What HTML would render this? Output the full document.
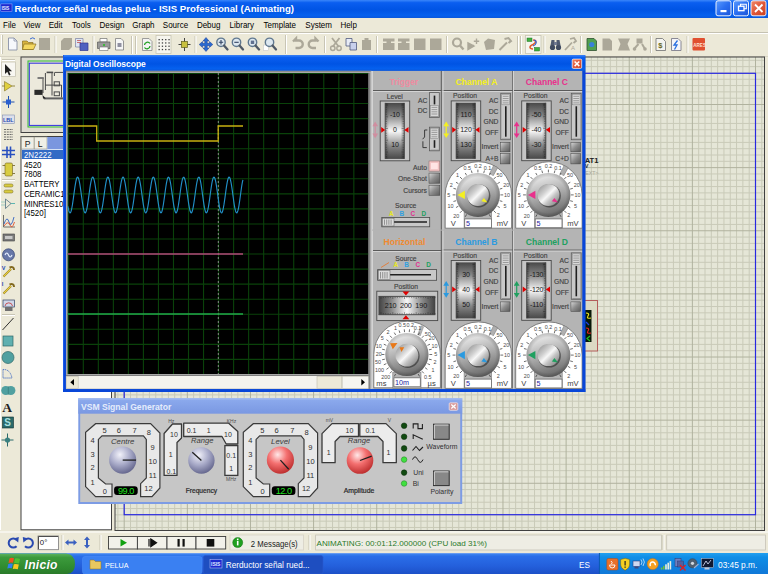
<!DOCTYPE html><html><head><meta charset="utf-8"><style>html,body{margin:0;padding:0;width:768px;height:574px;overflow:hidden;background:#ece9d8}svg{display:block}text{font-family:"Liberation Sans",sans-serif}</style></head><body><svg width="768" height="574" viewBox="0 0 768 574">
<defs>
<linearGradient id="gTitle" x1="0" y1="0" x2="0" y2="1">
 <stop offset="0" stop-color="#3a86fa"/><stop offset="0.15" stop-color="#0a5ef0"/>
 <stop offset="0.55" stop-color="#0054e4"/><stop offset="0.85" stop-color="#0560ee"/><stop offset="1" stop-color="#0a58dc"/>
</linearGradient>
<linearGradient id="gTitleIn" x1="0" y1="0" x2="0" y2="1">
 <stop offset="0" stop-color="#a8c0f4"/><stop offset="0.15" stop-color="#8aa8ec"/>
 <stop offset="1" stop-color="#7a98e2"/>
</linearGradient>
<linearGradient id="gTask" x1="0" y1="0" x2="0" y2="1">
 <stop offset="0" stop-color="#3d86f0"/><stop offset="0.15" stop-color="#2a6ee8"/><stop offset="0.6" stop-color="#2460dc"/><stop offset="1" stop-color="#1c50c8"/>
</linearGradient>
<linearGradient id="gStart" x1="0" y1="0" x2="0" y2="1">
 <stop offset="0" stop-color="#5fb45f"/><stop offset="0.2" stop-color="#3c9a3c"/><stop offset="0.7" stop-color="#2f8a2f"/><stop offset="1" stop-color="#2a7a2a"/>
</linearGradient>
<linearGradient id="gTray" x1="0" y1="0" x2="0" y2="1">
 <stop offset="0" stop-color="#22a0ef"/><stop offset="0.2" stop-color="#0f8ee6"/><stop offset="1" stop-color="#1078d8"/>
</linearGradient>
<linearGradient id="gDrumV" x1="0" y1="0" x2="0" y2="1">
 <stop offset="0" stop-color="#484848"/><stop offset="0.22" stop-color="#858585"/><stop offset="0.5" stop-color="#f8f8f8"/><stop offset="0.78" stop-color="#858585"/><stop offset="1" stop-color="#484848"/>
</linearGradient>
<linearGradient id="gDrumH" x1="0" y1="0" x2="1" y2="0">
 <stop offset="0" stop-color="#404040"/><stop offset="0.22" stop-color="#858585"/><stop offset="0.5" stop-color="#f8f8f8"/><stop offset="0.78" stop-color="#858585"/><stop offset="1" stop-color="#404040"/>
</linearGradient>
<linearGradient id="gEdgeV" x1="0" y1="0" x2="1" y2="0">
 <stop offset="0" stop-color="#000" stop-opacity="0.3"/><stop offset="0.2" stop-color="#000" stop-opacity="0"/><stop offset="0.8" stop-color="#000" stop-opacity="0"/><stop offset="1" stop-color="#000" stop-opacity="0.3"/>
</linearGradient>
<linearGradient id="gBtn" x1="0" y1="0" x2="1" y2="1">
 <stop offset="0" stop-color="#d8d8d8"/><stop offset="0.5" stop-color="#8c8c8c"/><stop offset="1" stop-color="#5a5a5a"/>
</linearGradient>
<linearGradient id="gKnob" x1="0.3" y1="0" x2="0.6" y2="1">
 <stop offset="0" stop-color="#f2f2f2"/><stop offset="0.4" stop-color="#bababa"/><stop offset="1" stop-color="#666666"/>
</linearGradient>
<radialGradient id="gKnobEdge" cx="0.5" cy="0.5" r="0.5">
 <stop offset="0.8" stop-color="#000" stop-opacity="0"/><stop offset="1" stop-color="#000" stop-opacity="0.2"/>
</radialGradient>
<linearGradient id="gCap" x1="0" y1="0" x2="1" y2="1">
 <stop offset="0" stop-color="#8a8a8a"/><stop offset="0.35" stop-color="#d0d0d0"/><stop offset="0.5" stop-color="#f8f8f8"/><stop offset="0.65" stop-color="#c4c4c4"/><stop offset="1" stop-color="#707070"/>
</linearGradient>
<radialGradient id="gBlueKnob" cx="0.4" cy="0.3" r="0.75">
 <stop offset="0" stop-color="#f2f2fa"/><stop offset="0.5" stop-color="#a8aac8"/><stop offset="1" stop-color="#5e6088"/>
</radialGradient>
<radialGradient id="gRedKnob" cx="0.4" cy="0.3" r="0.75">
 <stop offset="0" stop-color="#ffe8e8"/><stop offset="0.45" stop-color="#f47070"/><stop offset="1" stop-color="#b82828"/>
</radialGradient>
<linearGradient id="gXPbtn" x1="0" y1="0" x2="1" y2="1">
 <stop offset="0" stop-color="#5a9bff"/><stop offset="0.5" stop-color="#2a6ef0"/><stop offset="1" stop-color="#1c55d8"/>
</linearGradient>
<linearGradient id="gXPclose" x1="0" y1="0" x2="1" y2="1">
 <stop offset="0" stop-color="#f08a6a"/><stop offset="0.5" stop-color="#e0583a"/><stop offset="1" stop-color="#c84020"/>
</linearGradient>
</defs>
<rect x="0" y="0" width="768" height="574" fill="#ece9d8" /><rect x="0" y="0" width="768" height="18" fill="url(#gTitle)" /><rect x="0.8" y="3.9" width="11.2" height="7.8" fill="#1c2ad0" stroke="#a8b4ff" stroke-width="0.5"/><text x="1.6" y="10.2" font-size="4.6" fill="#dfe6ff" text-anchor="start" font-weight="bold" letter-spacing="-0.3">ISIS</text><text x="14.6" y="12.1" font-size="9.8" fill="#ffffff" text-anchor="start" font-weight="bold" textLength="279.50" lengthAdjust="spacingAndGlyphs" >Rerductor señal ruedas pelua - ISIS Professional (Animating)</text><rect x="716" y="0.8" width="15" height="15" rx="2" fill="url(#gXPbtn)" stroke="#ffffff" stroke-width="0.9"/><rect x="733.5" y="0.8" width="15" height="15" rx="2" fill="url(#gXPbtn)" stroke="#ffffff" stroke-width="0.9"/><rect x="751" y="0.8" width="15" height="15" rx="2" fill="url(#gXPclose)" stroke="#ffffff" stroke-width="0.9"/><rect x="720.5" y="10" width="6" height="2.2" fill="#fff" /><rect x="738.5" y="6.2" width="5.5" height="4.5" fill="none" stroke="#fff" stroke-width="1.3"/><path d="M740.5 6.2 V4.3 H746.3 V8.8 H744" fill="none" stroke="#fff" stroke-width="1.1"/><path d="M755 4.5 L762.5 12 M762.5 4.5 L755 12" stroke="#fff" stroke-width="1.8"/><text x="3" y="27.7" font-size="8.6" fill="#000" text-anchor="start" font-weight="normal" textLength="12.89" lengthAdjust="spacingAndGlyphs" >File</text><text x="23.4" y="27.7" font-size="8.6" fill="#000" text-anchor="start" font-weight="normal" textLength="17.19" lengthAdjust="spacingAndGlyphs" >View</text><text x="48.7" y="27.7" font-size="8.6" fill="#000" text-anchor="start" font-weight="normal" textLength="13.78" lengthAdjust="spacingAndGlyphs" >Edit</text><text x="72" y="27.7" font-size="8.6" fill="#000" text-anchor="start" font-weight="normal" textLength="18.67" lengthAdjust="spacingAndGlyphs" >Tools</text><text x="99.5" y="27.7" font-size="8.6" fill="#000" text-anchor="start" font-weight="normal" textLength="24.90" lengthAdjust="spacingAndGlyphs" >Design</text><text x="132.3" y="27.7" font-size="8.6" fill="#000" text-anchor="start" font-weight="normal" textLength="22.23" lengthAdjust="spacingAndGlyphs" >Graph</text><text x="162.8" y="27.7" font-size="8.6" fill="#000" text-anchor="start" font-weight="normal" textLength="25.34" lengthAdjust="spacingAndGlyphs" >Source</text><text x="196.9" y="27.7" font-size="8.6" fill="#000" text-anchor="start" font-weight="normal" textLength="23.57" lengthAdjust="spacingAndGlyphs" >Debug</text><text x="229.6" y="27.7" font-size="8.6" fill="#000" text-anchor="start" font-weight="normal" textLength="24.45" lengthAdjust="spacingAndGlyphs" >Library</text><text x="263.6" y="27.7" font-size="8.6" fill="#000" text-anchor="start" font-weight="normal" textLength="32.45" lengthAdjust="spacingAndGlyphs" >Template</text><text x="305.3" y="27.7" font-size="8.6" fill="#000" text-anchor="start" font-weight="normal" textLength="26.67" lengthAdjust="spacingAndGlyphs" >System</text><text x="340.4" y="27.7" font-size="8.6" fill="#000" text-anchor="start" font-weight="normal" textLength="16.45" lengthAdjust="spacingAndGlyphs" >Help</text><line x1="0" y1="32.5" x2="768" y2="32.5" stroke="#c5c2b2" stroke-width="1" /><line x1="0" y1="33.5" x2="768" y2="33.5" stroke="#ffffff" stroke-width="1" /><line x1="1.5" y1="35" x2="1.5" y2="54" stroke="#fff" stroke-width="1" /><line x1="2.5" y1="35" x2="2.5" y2="54" stroke="#c8c5b5" stroke-width="1" /><path d="M8.5 38 H14 L17 41 V50 H8.5 Z" fill="#f6f8fc" stroke="#8a92a8" stroke-width="0.9"/><path d="M14 38 V41 H17" fill="none" stroke="#8a92a8" stroke-width="0.8"/><path d="M22.5 41 H27 L28.5 42.5 H33 V49.5 H22.5 Z" fill="#d8b440" stroke="#8a7020" stroke-width="0.7"/><path d="M24 44 H36 L33.5 49.5 H22.5 Z" fill="#f4d860" stroke="#8a7020" stroke-width="0.7"/><path d="M30 39 Q33 36.5 35 39" fill="none" stroke="#3a6ad0" stroke-width="1"/><rect x="39" y="38" width="11" height="12" fill="#aca899" /><line x1="55" y1="36" x2="55" y2="53" stroke="#c8c5b5" stroke-width="1" /><line x1="56" y1="36" x2="56" y2="53" stroke="#ffffff" stroke-width="1" /><path d="M61 41 L64 38 H72 V47 L69 50 H61 Z" fill="#aca899"/><path d="M75.5 38.5 H83 V47 H75.5 Z" fill="#dfe6f4" stroke="#7a80a0" stroke-width="0.7"/><path d="M80 43 H88 V50.5 H80 Z" fill="#5060c0" stroke="#303890" stroke-width="0.7"/><path d="M77 40.5 H81 M77 42.5 H81" stroke="#c05050" stroke-width="0.8"/><line x1="93" y1="36" x2="93" y2="53" stroke="#c8c5b5" stroke-width="1" /><line x1="94" y1="36" x2="94" y2="53" stroke="#ffffff" stroke-width="1" /><path d="M100 38.5 H107 V42 H100 Z" fill="#fff" stroke="#707070" stroke-width="0.7"/><path d="M97.5 42 H110 V48.5 H97.5 Z" fill="#9a9a9a" stroke="#5a5a5a" stroke-width="0.7"/><path d="M99.5 47 H108 V50.5 H99.5 Z" fill="#fff" stroke="#707070" stroke-width="0.6"/><circle cx="104" cy="45" r="1" fill="#20c020"/><path d="M115.5 38.5 H121 L123.5 41 V50 H115.5 Z" fill="#f6f6f6" stroke="#808080" stroke-width="0.8"/><rect x="117.5" y="43" width="4" height="4" fill="#9090a0" /><line x1="131.5" y1="36" x2="131.5" y2="54" stroke="#c8c5b5" stroke-width="1" /><line x1="132.5" y1="36" x2="132.5" y2="54" stroke="#fff" stroke-width="1" /><line x1="135.5" y1="36" x2="135.5" y2="54" stroke="#c8c5b5" stroke-width="1" /><line x1="136.5" y1="36" x2="136.5" y2="54" stroke="#fff" stroke-width="1" /><path d="M142.5 38.5 H149 L152 41.5 V50.5 H142.5 Z" fill="#f4f4f4" stroke="#888" stroke-width="0.8"/><path d="M144.5 45 A3 3 0 0 1 150 43.5 M150 46 A3 3 0 0 1 144.5 47.5" fill="none" stroke="#20a020" stroke-width="1.3"/><rect x="156" y="35.5" width="15" height="18" fill="#f6f5ee" stroke="#c8c5b5" stroke-width="0.8"/><rect x="158.5" y="39.0" width="1.3" height="1.3" fill="#404040" /><rect x="158.5" y="42.3" width="1.3" height="1.3" fill="#404040" /><rect x="158.5" y="45.6" width="1.3" height="1.3" fill="#404040" /><rect x="158.5" y="48.9" width="1.3" height="1.3" fill="#404040" /><rect x="161.8" y="39.0" width="1.3" height="1.3" fill="#404040" /><rect x="161.8" y="42.3" width="1.3" height="1.3" fill="#404040" /><rect x="161.8" y="45.6" width="1.3" height="1.3" fill="#404040" /><rect x="161.8" y="48.9" width="1.3" height="1.3" fill="#404040" /><rect x="165.1" y="39.0" width="1.3" height="1.3" fill="#404040" /><rect x="165.1" y="42.3" width="1.3" height="1.3" fill="#404040" /><rect x="165.1" y="45.6" width="1.3" height="1.3" fill="#404040" /><rect x="165.1" y="48.9" width="1.3" height="1.3" fill="#404040" /><rect x="168.4" y="39.0" width="1.3" height="1.3" fill="#404040" /><rect x="168.4" y="42.3" width="1.3" height="1.3" fill="#404040" /><rect x="168.4" y="45.6" width="1.3" height="1.3" fill="#404040" /><rect x="168.4" y="48.9" width="1.3" height="1.3" fill="#404040" /><line x1="184.5" y1="38" x2="184.5" y2="51" stroke="#303030" stroke-width="0.9" /><line x1="178.5" y1="44.5" x2="190.5" y2="44.5" stroke="#303030" stroke-width="0.9" /><rect x="181.5" y="41.5" width="6" height="6" fill="#c8c040" stroke="#606020" stroke-width="0.7"/><line x1="195" y1="36" x2="195" y2="53" stroke="#c8c5b5" stroke-width="1" /><line x1="196" y1="36" x2="196" y2="53" stroke="#ffffff" stroke-width="1" /><path d="M206 37.5 L209 41 H207.2 V43.3 H209.5 V41.5 L212.8 44.5 L209.5 47.5 V45.7 H207.2 V48 H209 L206 51.5 L203 48 H204.8 V45.7 H202.5 V47.5 L199.2 44.5 L202.5 41.5 V43.3 H204.8 V41 H203 Z" fill="#2a6ad0" stroke="#1a3a90" stroke-width="0.5"/><circle cx="221.0" cy="42.3" r="4.2" fill="#dde8f0" stroke="#607890" stroke-width="1.4"/><path d="M224.0 45.5 L227.5 49.5" stroke="#505a68" stroke-width="2.3" stroke-linecap="round"/><path d="M218.8 42.3 H223.2 M221.0 40.1 V44.5" stroke="#304060" stroke-width="1.1"/><circle cx="236.5" cy="42.3" r="4.2" fill="#dde8f0" stroke="#607890" stroke-width="1.4"/><path d="M239.5 45.5 L243 49.5" stroke="#505a68" stroke-width="2.3" stroke-linecap="round"/><path d="M234.3 42.3 H238.7" stroke="#304060" stroke-width="1.1"/><circle cx="252.5" cy="42.3" r="4.2" fill="#dde8f0" stroke="#607890" stroke-width="1.4"/><path d="M255.5 45.5 L259 49.5" stroke="#505a68" stroke-width="2.3" stroke-linecap="round"/><rect x="250.8" y="40.6" width="3.4" height="3.4" fill="#607090" /><rect x="263.5" y="45" width="5" height="5.5" fill="#fff" stroke="#c0c0c0" stroke-width="0.5"/><circle cx="269.5" cy="42.3" r="4.2" fill="#dde8f0" stroke="#607890" stroke-width="1.4"/><path d="M272.5 45.5 L276 49.5" stroke="#505a68" stroke-width="2.3" stroke-linecap="round"/><line x1="285.5" y1="35" x2="285.5" y2="54" stroke="#c8c5b5" stroke-width="1" /><line x1="286.5" y1="35" x2="286.5" y2="54" stroke="#fff" stroke-width="1" /><path d="M293 41.5 L296 38.5 V40.5 H299 A3.5 3.5 0 0 1 299 48 H295.5" fill="none" stroke="#aca899" stroke-width="2.4"/><path d="M318.5 41.5 L315.5 38.5 V40.5 H312.5 A3.5 3.5 0 0 0 312.5 48 H316" fill="none" stroke="#aca899" stroke-width="2.4"/><line x1="324.5" y1="36" x2="324.5" y2="53" stroke="#c8c5b5" stroke-width="1" /><line x1="325.5" y1="36" x2="325.5" y2="53" stroke="#ffffff" stroke-width="1" /><path d="M332 38 L339 47 M339.5 38 L332.5 47" stroke="#aca899" stroke-width="1.8"/><circle cx="332.8" cy="48.3" r="2.2" fill="none" stroke="#aca899" stroke-width="1.5"/><circle cx="339" cy="48.3" r="2.2" fill="none" stroke="#aca899" stroke-width="1.5"/><path d="M346 38.5 H352 V46 H346 Z" fill="#e8ecf6" stroke="#505a80" stroke-width="0.8"/><path d="M350 42.5 H356.5 V50 H350 Z" fill="#c8d0ec" stroke="#505a80" stroke-width="0.8"/><path d="M362 40 H371 V50 H362 Z" fill="#aca899"/><rect x="364.5" y="38" width="4" height="3" fill="#aca899" /><line x1="376.5" y1="36" x2="376.5" y2="53" stroke="#c8c5b5" stroke-width="1" /><line x1="377.5" y1="36" x2="377.5" y2="53" stroke="#ffffff" stroke-width="1" /><path d="M383 38.5 H394.5 V41.5 H391 V43 H394.5 V50 H383 V43 H386.5 V41.5 H383 Z" fill="#aca899"/><path d="M398 38.5 H409.5 V41.5 H406 V43 H409.5 V50 H398 V43 H401.5 V41.5 H398 Z" fill="#aca899"/><rect x="414" y="38.5" width="11.5" height="11.5" fill="#aca899" /><rect x="430" y="38.5" width="11.5" height="11.5" fill="#aca899" /><line x1="446.5" y1="36" x2="446.5" y2="53" stroke="#c8c5b5" stroke-width="1" /><line x1="447.5" y1="36" x2="447.5" y2="53" stroke="#ffffff" stroke-width="1" /><circle cx="457" cy="42.5" r="4" fill="none" stroke="#aca899" stroke-width="2.2"/><path d="M460 45.5 L463.5 49.5" stroke="#aca899" stroke-width="2.4"/><path d="M468 43 L474 46 L468 49.5 Z M471 45.5 H474 M476.5 38.5 V44 M473.8 41.2 H479.2" fill="#aca899" stroke="#aca899" stroke-width="1.4"/><path d="M484 42 L488 38.5 L495 40 L494 49 L486 50 Z" fill="#aca899"/><path d="M499.5 50 L507 42.5 M504.5 39 L508.5 38 L511 41 L508.5 43" fill="none" stroke="#aca899" stroke-width="2"/><line x1="517.5" y1="36" x2="517.5" y2="54" stroke="#c8c5b5" stroke-width="1" /><line x1="518.5" y1="36" x2="518.5" y2="54" stroke="#fff" stroke-width="1" /><line x1="520.5" y1="36" x2="520.5" y2="54" stroke="#c8c5b5" stroke-width="1" /><line x1="521.5" y1="36" x2="521.5" y2="54" stroke="#fff" stroke-width="1" /><rect x="525.5" y="35.5" width="15.5" height="18" fill="#f6f5ee" stroke="#c8c5b5" stroke-width="0.8"/><path d="M533 40 C 537 40, 536 43, 533 44.5 C 529 46, 529 49, 533 49" fill="none" stroke="#e06030" stroke-width="1.6"/><path d="M534 40 C 537.5 41, 536.5 45, 533 46" fill="none" stroke="#3060d0" stroke-width="1.2"/><rect x="527" y="38" width="5" height="3.5" fill="#40b040" stroke="#207020" stroke-width="0.5"/><rect x="534.5" y="47.5" width="5" height="3.5" fill="#40b040" stroke="#207020" stroke-width="0.5"/><line x1="544" y1="36" x2="544" y2="53" stroke="#c8c5b5" stroke-width="1" /><line x1="545" y1="36" x2="545" y2="53" stroke="#ffffff" stroke-width="1" /><path d="M550 48 L551.5 40 H554.5 V48 Z M556.5 48 V40 H559.5 L561 48 Z" fill="#505a70"/><circle cx="552.5" cy="47.5" r="2.6" fill="#404a60"/><circle cx="558.5" cy="47.5" r="2.6" fill="#404a60"/><rect x="554" y="42" width="3" height="3" fill="#707890" /><path d="M565 50 L572 42.5 M570 39 L574 38 L576 41 L573.5 43" fill="none" stroke="#aca899" stroke-width="1.8"/><text x="571" y="50" font-size="6" fill="#aca899">A</text><line x1="580.5" y1="36" x2="580.5" y2="53" stroke="#c8c5b5" stroke-width="1" /><line x1="581.5" y1="36" x2="581.5" y2="53" stroke="#ffffff" stroke-width="1" /><path d="M587 38.5 H594 L596.5 41 V50.5 H587 Z" fill="#50a050" stroke="#305030" stroke-width="0.8"/><circle cx="591.8" cy="44.5" r="2.6" fill="#3880d8"/><path d="M602.5 38.5 H609.5 L612 41 V50.5 H602.5 Z" fill="#aca899"/><path d="M618 38.5 H630 L627.5 44 L630 50.5 H618 L620.5 44 Z" fill="#aca899"/><path d="M634 49 L638.5 44 M642 44 L645 49" stroke="#aca899" stroke-width="2"/><rect x="636.5" y="38.5" width="6" height="5" fill="#aca899"/><circle cx="634.5" cy="49" r="1.8" fill="#aca899"/><circle cx="645" cy="49" r="1.8" fill="#aca899"/><line x1="650.5" y1="36" x2="650.5" y2="53" stroke="#c8c5b5" stroke-width="1" /><line x1="651.5" y1="36" x2="651.5" y2="53" stroke="#ffffff" stroke-width="1" /><path d="M656 38.5 H662.5 L665.5 41.5 V50.5 H656 Z" fill="#f4f4f0" stroke="#707070" stroke-width="0.8"/><text x="658.3" y="48.3" font-size="7.5" fill="#6a6a20" text-anchor="start" font-weight="bold" >$</text><path d="M671.5 38.5 H678 L681 41.5 V50.5 H671.5 Z" fill="#f4f4f8" stroke="#707080" stroke-width="0.8"/><path d="M677.5 40.5 L674 45 H677 L674.5 49.5" fill="none" stroke="#2a70e0" stroke-width="1.3"/><line x1="687" y1="36" x2="687" y2="53" stroke="#c8c5b5" stroke-width="1" /><line x1="688" y1="36" x2="688" y2="53" stroke="#ffffff" stroke-width="1" /><rect x="692.5" y="38" width="12.5" height="12.5" fill="#e05030" rx="1"/><text x="693.2" y="47.2" font-size="4.6" fill="#ffe0d0" text-anchor="start" font-weight="bold" >ARES</text><line x1="0" y1="56.5" x2="768" y2="56.5" stroke="#d8d4c4" stroke-width="1" /><line x1="0.5" y1="57" x2="0.5" y2="530" stroke="#fff" stroke-width="1" /><line x1="2" y1="59.5" x2="15" y2="59.5" stroke="#c8c5b5" stroke-width="1" /><line x1="2" y1="60.5" x2="15" y2="60.5" stroke="#fff" stroke-width="1" /><rect x="1.5" y="62" width="14" height="14.5" fill="#f8f7f2" stroke="#c8c5b5" stroke-width="0.8"/><path d="M5 64 V74 L7.3 71.8 L9 75.5 L10.6 74.8 L9 71.2 H12 Z" fill="#202020"/><path d="M4.5 81.5 L12 86 L4.5 91 Z" fill="#e0d040" stroke="#807020" stroke-width="0.6"/><line x1="2" y1="86" x2="4.5" y2="86" stroke="#807020" stroke-width="0.8" /><line x1="12" y1="86" x2="15" y2="86" stroke="#807020" stroke-width="0.8" /><line x1="8.5" y1="96" x2="8.5" y2="108" stroke="#2050b0" stroke-width="1" /><line x1="2.5" y1="102" x2="14.5" y2="102" stroke="#2050b0" stroke-width="1" /><rect x="6" y="99.5" width="5" height="5" fill="#2a60d0"/><rect x="2.5" y="115" width="12" height="8.5" fill="#dde0ec" stroke="#8090b0" stroke-width="0.6"/><text x="3" y="121.8" font-size="5.5" fill="#2a4ab0" text-anchor="start" font-weight="bold" >LBL</text><line x1="4" y1="129.5" x2="13" y2="129.5" stroke="#606060" stroke-width="0.9" stroke-dasharray="2,0.8"/><line x1="4" y1="132" x2="13" y2="132" stroke="#606060" stroke-width="0.9" stroke-dasharray="2,0.8"/><line x1="4" y1="134.5" x2="13" y2="134.5" stroke="#606060" stroke-width="0.9" stroke-dasharray="2,0.8"/><line x1="4" y1="137" x2="13" y2="137" stroke="#606060" stroke-width="0.9" stroke-dasharray="2,0.8"/><line x1="4" y1="139.5" x2="13" y2="139.5" stroke="#606060" stroke-width="0.9" stroke-dasharray="2,0.8"/><line x1="2" y1="150.5" x2="15" y2="150.5" stroke="#2a50c0" stroke-width="1.5" /><line x1="2" y1="154.5" x2="15" y2="154.5" stroke="#2a50c0" stroke-width="1.5" /><line x1="7" y1="146.5" x2="7" y2="158" stroke="#2a50c0" stroke-width="1.6" /><line x1="10.5" y1="146.5" x2="10.5" y2="158" stroke="#2a50c0" stroke-width="1.6" /><rect x="5" y="163" width="7.5" height="13" rx="1.5" fill="#d8cc40" stroke="#706020" stroke-width="0.6"/><line x1="2.5" y1="165.5" x2="5" y2="165.5" stroke="#706020" stroke-width="0.8" /><line x1="12.5" y1="165.5" x2="15" y2="165.5" stroke="#706020" stroke-width="0.8" /><line x1="2.5" y1="173.5" x2="5" y2="173.5" stroke="#706020" stroke-width="0.8" /><line x1="12.5" y1="173.5" x2="15" y2="173.5" stroke="#706020" stroke-width="0.8" /><line x1="2" y1="179.5" x2="15" y2="179.5" stroke="#c8c5b5" stroke-width="1" /><line x1="2" y1="180.5" x2="15" y2="180.5" stroke="#fff" stroke-width="1" /><rect x="4" y="184" width="9" height="3" rx="1.5" fill="#d8cc40" stroke="#706020" stroke-width="0.5"/><rect x="4" y="190" width="9" height="3" rx="1.5" fill="#d8cc40" stroke="#706020" stroke-width="0.5"/><path d="M5.5 199 L11 203.5 L5.5 208.5 Z" fill="none" stroke="#507080" stroke-width="0.8"/><line x1="1.5" y1="202" x2="5.5" y2="202" stroke="#20a0a0" stroke-width="0.7" stroke-dasharray="1,1"/><line x1="1.5" y1="205" x2="5.5" y2="205" stroke="#20a0a0" stroke-width="0.7" stroke-dasharray="1,1"/><line x1="11" y1="203.5" x2="15" y2="203.5" stroke="#20a0a0" stroke-width="0.7" /><path d="M3.5 215 V227 H15" fill="none" stroke="#505050" stroke-width="0.8"/><path d="M4 224 Q7 215 9 222 T14 217" fill="none" stroke="#3060c0" stroke-width="0.9"/><path d="M4 226 Q8 220 10 225 T14.5 222" fill="none" stroke="#e05030" stroke-width="0.9"/><rect x="3" y="234" width="11.5" height="7" fill="#7a7a7a" stroke="#404040" stroke-width="0.6"/><rect x="5" y="236" width="7.5" height="3" fill="#c8c8c8" /><circle cx="8.5" cy="254.8" r="6" fill="#6878a8" stroke="#304070" stroke-width="0.7"/><path d="M5 255 Q6.8 251 8.5 255 T12 255" fill="none" stroke="#e8f0ff" stroke-width="1.2"/><text x="1.8" y="269.5" font-size="5.5" fill="#2040b0" text-anchor="start" font-weight="bold" >V</text><path d="M3.5 276.5 L11 269 M9.5 267.5 Q14 266 14 270" fill="none" stroke="#806820" stroke-width="2"/><path d="M3.5 276.5 L11 269" stroke="#e8d040" stroke-width="1.2"/><text x="1.8" y="286" font-size="5.5" fill="#2040b0" text-anchor="start" font-weight="bold" >I</text><path d="M3.5 293.5 L11 286 M9.5 284.5 Q14 283 14 287" fill="none" stroke="#806820" stroke-width="2"/><path d="M3.5 293.5 L11 286" stroke="#e8d040" stroke-width="1.2"/><rect x="3" y="300" width="11.5" height="7" fill="#d0d8e8" stroke="#304060" stroke-width="0.7"/><path d="M5 306 A3.8 3.8 0 0 1 12.5 306" fill="none" stroke="#c03030" stroke-width="0.8"/><rect x="5" y="307" width="7.5" height="4" fill="#707070" /><line x1="2" y1="314.5" x2="15" y2="314.5" stroke="#c8c5b5" stroke-width="1" /><line x1="2" y1="315.5" x2="15" y2="315.5" stroke="#fff" stroke-width="1" /><line x1="2.5" y1="330" x2="13.5" y2="318" stroke="#303030" stroke-width="1" /><rect x="3" y="336" width="10" height="10" fill="#60b0b0" stroke="#306868" stroke-width="0.7"/><circle cx="8" cy="357.5" r="6" fill="#50a0a0" stroke="#306868" stroke-width="0.7"/><path d="M3 369.5 Q10 369 12 378 H3 Z" fill="none" stroke="#3060c0" stroke-width="0.9" stroke-dasharray="1.2,0.8"/><circle cx="5.8" cy="390.5" r="4.6" fill="#50a0a0"/><circle cx="10.8" cy="390.5" r="4.6" fill="#50a0a0"/><path d="M8.3 386.5 V394.5" stroke="#3a8080" stroke-width="0.8"/><text x="2.2" y="412" font-size="13.5" fill="#202020" text-anchor="start" font-weight="bold" style="font-family:Liberation Serif,serif">A</text><rect x="2.5" y="417" width="11" height="11" fill="#2a6a6a" stroke="#103030" stroke-width="0.6"/><text x="4.2" y="426.3" font-size="10" fill="#a8e0e0" text-anchor="start" font-weight="bold" >S</text><line x1="7.5" y1="433.5" x2="7.5" y2="446.5" stroke="#2a6a6a" stroke-width="1" /><line x1="1.5" y1="440" x2="13.5" y2="440" stroke="#2a6a6a" stroke-width="1" /><circle cx="7.5" cy="440" r="2.6" fill="#3a8080"/><rect x="21" y="57" width="90.5" height="75.5" fill="#dedbd0" stroke="#404040" stroke-width="1"/><rect x="28" y="61" width="83" height="66" fill="none" stroke="#30c030" stroke-width="1"/><rect x="29.3" y="63.2" width="82" height="62.2" fill="#ece9dc" stroke="#3030e0" stroke-width="1"/><g fill="none" stroke="#4a4a4a" stroke-width="1"><path d="M46.6 72.4 H53.2" stroke-width="1.6"/><path d="M54.8 72.4 H63.4 M54.4 72.4 V76"/><path d="M52 73 V95.5 M45.4 73 V90 M43 78 V93 M45 85.1 H52 M61.5 85 V97.5 M52 85.1 H61.5"/><path d="M37.5 78 H43.8" stroke-width="1.8" stroke="#707070"/><rect x="54.2" y="81.8" width="5.2" height="4"/><rect x="54.2" y="91.9" width="5.2" height="3.8"/><path d="M43.8 98.4 H63" stroke-width="2" stroke="#606060"/></g><rect x="34.4" y="89.8" width="8.2" height="5.1" fill="#2a2a2a"/><path d="M42.5 95 L46 98.5 L43 98.5 Z" fill="#202020"/><rect x="21" y="136.5" width="90.5" height="393.3" fill="#ffffff" stroke="#404040" stroke-width="1"/><rect x="21.5" y="137" width="12.5" height="12" fill="#f0efe6" stroke="#9a9888" stroke-width="0.6"/><rect x="34.5" y="137" width="12.5" height="12" fill="#f0efe6" stroke="#9a9888" stroke-width="0.6"/><rect x="47.3" y="137" width="64" height="12" fill="#7a96df" /><text x="24.8" y="146.5" font-size="8.6" fill="#202020" text-anchor="start" font-weight="normal" >P</text><text x="37.8" y="146.5" font-size="8.6" fill="#202020" text-anchor="start" font-weight="normal" >L</text><rect x="22" y="149.8" width="89" height="9.2" fill="#316ac5" /><text x="23.9" y="158.0" font-size="9.4" fill="#ffffff" text-anchor="start" font-weight="normal" textLength="27.66" lengthAdjust="spacingAndGlyphs" >2N2222</text><text x="23.9" y="167.7" font-size="9.4" fill="#000000" text-anchor="start" font-weight="normal" textLength="17.57" lengthAdjust="spacingAndGlyphs" >4520</text><text x="23.9" y="177.4" font-size="9.4" fill="#000000" text-anchor="start" font-weight="normal" textLength="17.57" lengthAdjust="spacingAndGlyphs" >7808</text><text x="23.9" y="187.1" font-size="9.4" fill="#000000" text-anchor="start" font-weight="normal" textLength="35.69" lengthAdjust="spacingAndGlyphs" >BATTERY</text><text x="23.9" y="196.8" font-size="9.4" fill="#000000" text-anchor="start" font-weight="normal" textLength="40.80" lengthAdjust="spacingAndGlyphs" >CERAMIC1</text><text x="23.9" y="206.5" font-size="9.4" fill="#000000" text-anchor="start" font-weight="normal" textLength="39.49" lengthAdjust="spacingAndGlyphs" >MINRES10</text><text x="23.9" y="216.2" font-size="9.4" fill="#000000" text-anchor="start" font-weight="normal" textLength="21.95" lengthAdjust="spacingAndGlyphs" >[4520]</text><rect x="115" y="57" width="649.5" height="473.5" fill="#e5e6d7" /><g><line x1="117.89" y1="57" x2="117.89" y2="530.5" stroke="#c9cab8" stroke-width="1"/><line x1="130.51" y1="57" x2="130.51" y2="530.5" stroke="#c9cab8" stroke-width="1"/><line x1="136.83" y1="57" x2="136.83" y2="530.5" stroke="#c9cab8" stroke-width="1"/><line x1="143.14" y1="57" x2="143.14" y2="530.5" stroke="#c9cab8" stroke-width="1"/><line x1="149.45" y1="57" x2="149.45" y2="530.5" stroke="#c9cab8" stroke-width="1"/><line x1="155.76" y1="57" x2="155.76" y2="530.5" stroke="#c9cab8" stroke-width="1"/><line x1="162.08" y1="57" x2="162.08" y2="530.5" stroke="#c9cab8" stroke-width="1"/><line x1="168.39" y1="57" x2="168.39" y2="530.5" stroke="#c9cab8" stroke-width="1"/><line x1="174.70" y1="57" x2="174.70" y2="530.5" stroke="#c9cab8" stroke-width="1"/><line x1="181.02" y1="57" x2="181.02" y2="530.5" stroke="#c9cab8" stroke-width="1"/><line x1="193.64" y1="57" x2="193.64" y2="530.5" stroke="#c9cab8" stroke-width="1"/><line x1="199.96" y1="57" x2="199.96" y2="530.5" stroke="#c9cab8" stroke-width="1"/><line x1="206.27" y1="57" x2="206.27" y2="530.5" stroke="#c9cab8" stroke-width="1"/><line x1="212.58" y1="57" x2="212.58" y2="530.5" stroke="#c9cab8" stroke-width="1"/><line x1="218.89" y1="57" x2="218.89" y2="530.5" stroke="#c9cab8" stroke-width="1"/><line x1="225.21" y1="57" x2="225.21" y2="530.5" stroke="#c9cab8" stroke-width="1"/><line x1="231.52" y1="57" x2="231.52" y2="530.5" stroke="#c9cab8" stroke-width="1"/><line x1="237.83" y1="57" x2="237.83" y2="530.5" stroke="#c9cab8" stroke-width="1"/><line x1="244.15" y1="57" x2="244.15" y2="530.5" stroke="#c9cab8" stroke-width="1"/><line x1="256.77" y1="57" x2="256.77" y2="530.5" stroke="#c9cab8" stroke-width="1"/><line x1="263.09" y1="57" x2="263.09" y2="530.5" stroke="#c9cab8" stroke-width="1"/><line x1="269.40" y1="57" x2="269.40" y2="530.5" stroke="#c9cab8" stroke-width="1"/><line x1="275.71" y1="57" x2="275.71" y2="530.5" stroke="#c9cab8" stroke-width="1"/><line x1="282.02" y1="57" x2="282.02" y2="530.5" stroke="#c9cab8" stroke-width="1"/><line x1="288.34" y1="57" x2="288.34" y2="530.5" stroke="#c9cab8" stroke-width="1"/><line x1="294.65" y1="57" x2="294.65" y2="530.5" stroke="#c9cab8" stroke-width="1"/><line x1="300.96" y1="57" x2="300.96" y2="530.5" stroke="#c9cab8" stroke-width="1"/><line x1="307.28" y1="57" x2="307.28" y2="530.5" stroke="#c9cab8" stroke-width="1"/><line x1="319.90" y1="57" x2="319.90" y2="530.5" stroke="#c9cab8" stroke-width="1"/><line x1="326.22" y1="57" x2="326.22" y2="530.5" stroke="#c9cab8" stroke-width="1"/><line x1="332.53" y1="57" x2="332.53" y2="530.5" stroke="#c9cab8" stroke-width="1"/><line x1="338.84" y1="57" x2="338.84" y2="530.5" stroke="#c9cab8" stroke-width="1"/><line x1="345.15" y1="57" x2="345.15" y2="530.5" stroke="#c9cab8" stroke-width="1"/><line x1="351.47" y1="57" x2="351.47" y2="530.5" stroke="#c9cab8" stroke-width="1"/><line x1="357.78" y1="57" x2="357.78" y2="530.5" stroke="#c9cab8" stroke-width="1"/><line x1="364.09" y1="57" x2="364.09" y2="530.5" stroke="#c9cab8" stroke-width="1"/><line x1="370.41" y1="57" x2="370.41" y2="530.5" stroke="#c9cab8" stroke-width="1"/><line x1="383.03" y1="57" x2="383.03" y2="530.5" stroke="#c9cab8" stroke-width="1"/><line x1="389.35" y1="57" x2="389.35" y2="530.5" stroke="#c9cab8" stroke-width="1"/><line x1="395.66" y1="57" x2="395.66" y2="530.5" stroke="#c9cab8" stroke-width="1"/><line x1="401.97" y1="57" x2="401.97" y2="530.5" stroke="#c9cab8" stroke-width="1"/><line x1="408.28" y1="57" x2="408.28" y2="530.5" stroke="#c9cab8" stroke-width="1"/><line x1="414.60" y1="57" x2="414.60" y2="530.5" stroke="#c9cab8" stroke-width="1"/><line x1="420.91" y1="57" x2="420.91" y2="530.5" stroke="#c9cab8" stroke-width="1"/><line x1="427.22" y1="57" x2="427.22" y2="530.5" stroke="#c9cab8" stroke-width="1"/><line x1="433.54" y1="57" x2="433.54" y2="530.5" stroke="#c9cab8" stroke-width="1"/><line x1="446.16" y1="57" x2="446.16" y2="530.5" stroke="#c9cab8" stroke-width="1"/><line x1="452.48" y1="57" x2="452.48" y2="530.5" stroke="#c9cab8" stroke-width="1"/><line x1="458.79" y1="57" x2="458.79" y2="530.5" stroke="#c9cab8" stroke-width="1"/><line x1="465.10" y1="57" x2="465.10" y2="530.5" stroke="#c9cab8" stroke-width="1"/><line x1="471.41" y1="57" x2="471.41" y2="530.5" stroke="#c9cab8" stroke-width="1"/><line x1="477.73" y1="57" x2="477.73" y2="530.5" stroke="#c9cab8" stroke-width="1"/><line x1="484.04" y1="57" x2="484.04" y2="530.5" stroke="#c9cab8" stroke-width="1"/><line x1="490.35" y1="57" x2="490.35" y2="530.5" stroke="#c9cab8" stroke-width="1"/><line x1="496.67" y1="57" x2="496.67" y2="530.5" stroke="#c9cab8" stroke-width="1"/><line x1="509.29" y1="57" x2="509.29" y2="530.5" stroke="#c9cab8" stroke-width="1"/><line x1="515.61" y1="57" x2="515.61" y2="530.5" stroke="#c9cab8" stroke-width="1"/><line x1="521.92" y1="57" x2="521.92" y2="530.5" stroke="#c9cab8" stroke-width="1"/><line x1="528.23" y1="57" x2="528.23" y2="530.5" stroke="#c9cab8" stroke-width="1"/><line x1="534.54" y1="57" x2="534.54" y2="530.5" stroke="#c9cab8" stroke-width="1"/><line x1="540.86" y1="57" x2="540.86" y2="530.5" stroke="#c9cab8" stroke-width="1"/><line x1="547.17" y1="57" x2="547.17" y2="530.5" stroke="#c9cab8" stroke-width="1"/><line x1="553.48" y1="57" x2="553.48" y2="530.5" stroke="#c9cab8" stroke-width="1"/><line x1="559.80" y1="57" x2="559.80" y2="530.5" stroke="#c9cab8" stroke-width="1"/><line x1="572.42" y1="57" x2="572.42" y2="530.5" stroke="#c9cab8" stroke-width="1"/><line x1="578.74" y1="57" x2="578.74" y2="530.5" stroke="#c9cab8" stroke-width="1"/><line x1="585.05" y1="57" x2="585.05" y2="530.5" stroke="#c9cab8" stroke-width="1"/><line x1="591.36" y1="57" x2="591.36" y2="530.5" stroke="#c9cab8" stroke-width="1"/><line x1="597.67" y1="57" x2="597.67" y2="530.5" stroke="#c9cab8" stroke-width="1"/><line x1="603.99" y1="57" x2="603.99" y2="530.5" stroke="#c9cab8" stroke-width="1"/><line x1="610.30" y1="57" x2="610.30" y2="530.5" stroke="#c9cab8" stroke-width="1"/><line x1="616.61" y1="57" x2="616.61" y2="530.5" stroke="#c9cab8" stroke-width="1"/><line x1="622.93" y1="57" x2="622.93" y2="530.5" stroke="#c9cab8" stroke-width="1"/><line x1="635.55" y1="57" x2="635.55" y2="530.5" stroke="#c9cab8" stroke-width="1"/><line x1="641.87" y1="57" x2="641.87" y2="530.5" stroke="#c9cab8" stroke-width="1"/><line x1="648.18" y1="57" x2="648.18" y2="530.5" stroke="#c9cab8" stroke-width="1"/><line x1="654.49" y1="57" x2="654.49" y2="530.5" stroke="#c9cab8" stroke-width="1"/><line x1="660.81" y1="57" x2="660.81" y2="530.5" stroke="#c9cab8" stroke-width="1"/><line x1="667.12" y1="57" x2="667.12" y2="530.5" stroke="#c9cab8" stroke-width="1"/><line x1="673.43" y1="57" x2="673.43" y2="530.5" stroke="#c9cab8" stroke-width="1"/><line x1="679.74" y1="57" x2="679.74" y2="530.5" stroke="#c9cab8" stroke-width="1"/><line x1="686.06" y1="57" x2="686.06" y2="530.5" stroke="#c9cab8" stroke-width="1"/><line x1="698.68" y1="57" x2="698.68" y2="530.5" stroke="#c9cab8" stroke-width="1"/><line x1="705.00" y1="57" x2="705.00" y2="530.5" stroke="#c9cab8" stroke-width="1"/><line x1="711.31" y1="57" x2="711.31" y2="530.5" stroke="#c9cab8" stroke-width="1"/><line x1="717.62" y1="57" x2="717.62" y2="530.5" stroke="#c9cab8" stroke-width="1"/><line x1="723.94" y1="57" x2="723.94" y2="530.5" stroke="#c9cab8" stroke-width="1"/><line x1="730.25" y1="57" x2="730.25" y2="530.5" stroke="#c9cab8" stroke-width="1"/><line x1="736.56" y1="57" x2="736.56" y2="530.5" stroke="#c9cab8" stroke-width="1"/><line x1="742.87" y1="57" x2="742.87" y2="530.5" stroke="#c9cab8" stroke-width="1"/><line x1="749.19" y1="57" x2="749.19" y2="530.5" stroke="#c9cab8" stroke-width="1"/><line x1="761.81" y1="57" x2="761.81" y2="530.5" stroke="#c9cab8" stroke-width="1"/><line x1="115" y1="60.31" x2="764.5" y2="60.31" stroke="#c9cab8" stroke-width="1"/><line x1="115" y1="66.62" x2="764.5" y2="66.62" stroke="#c9cab8" stroke-width="1"/><line x1="115" y1="72.94" x2="764.5" y2="72.94" stroke="#c9cab8" stroke-width="1"/><line x1="115" y1="79.25" x2="764.5" y2="79.25" stroke="#c9cab8" stroke-width="1"/><line x1="115" y1="85.56" x2="764.5" y2="85.56" stroke="#c9cab8" stroke-width="1"/><line x1="115" y1="91.87" x2="764.5" y2="91.87" stroke="#c9cab8" stroke-width="1"/><line x1="115" y1="98.19" x2="764.5" y2="98.19" stroke="#c9cab8" stroke-width="1"/><line x1="115" y1="110.81" x2="764.5" y2="110.81" stroke="#c9cab8" stroke-width="1"/><line x1="115" y1="117.13" x2="764.5" y2="117.13" stroke="#c9cab8" stroke-width="1"/><line x1="115" y1="123.44" x2="764.5" y2="123.44" stroke="#c9cab8" stroke-width="1"/><line x1="115" y1="129.75" x2="764.5" y2="129.75" stroke="#c9cab8" stroke-width="1"/><line x1="115" y1="136.06" x2="764.5" y2="136.06" stroke="#c9cab8" stroke-width="1"/><line x1="115" y1="142.38" x2="764.5" y2="142.38" stroke="#c9cab8" stroke-width="1"/><line x1="115" y1="148.69" x2="764.5" y2="148.69" stroke="#c9cab8" stroke-width="1"/><line x1="115" y1="155.00" x2="764.5" y2="155.00" stroke="#c9cab8" stroke-width="1"/><line x1="115" y1="161.32" x2="764.5" y2="161.32" stroke="#c9cab8" stroke-width="1"/><line x1="115" y1="173.94" x2="764.5" y2="173.94" stroke="#c9cab8" stroke-width="1"/><line x1="115" y1="180.26" x2="764.5" y2="180.26" stroke="#c9cab8" stroke-width="1"/><line x1="115" y1="186.57" x2="764.5" y2="186.57" stroke="#c9cab8" stroke-width="1"/><line x1="115" y1="192.88" x2="764.5" y2="192.88" stroke="#c9cab8" stroke-width="1"/><line x1="115" y1="199.19" x2="764.5" y2="199.19" stroke="#c9cab8" stroke-width="1"/><line x1="115" y1="205.51" x2="764.5" y2="205.51" stroke="#c9cab8" stroke-width="1"/><line x1="115" y1="211.82" x2="764.5" y2="211.82" stroke="#c9cab8" stroke-width="1"/><line x1="115" y1="218.13" x2="764.5" y2="218.13" stroke="#c9cab8" stroke-width="1"/><line x1="115" y1="224.45" x2="764.5" y2="224.45" stroke="#c9cab8" stroke-width="1"/><line x1="115" y1="237.07" x2="764.5" y2="237.07" stroke="#c9cab8" stroke-width="1"/><line x1="115" y1="243.39" x2="764.5" y2="243.39" stroke="#c9cab8" stroke-width="1"/><line x1="115" y1="249.70" x2="764.5" y2="249.70" stroke="#c9cab8" stroke-width="1"/><line x1="115" y1="256.01" x2="764.5" y2="256.01" stroke="#c9cab8" stroke-width="1"/><line x1="115" y1="262.32" x2="764.5" y2="262.32" stroke="#c9cab8" stroke-width="1"/><line x1="115" y1="268.64" x2="764.5" y2="268.64" stroke="#c9cab8" stroke-width="1"/><line x1="115" y1="274.95" x2="764.5" y2="274.95" stroke="#c9cab8" stroke-width="1"/><line x1="115" y1="281.26" x2="764.5" y2="281.26" stroke="#c9cab8" stroke-width="1"/><line x1="115" y1="287.58" x2="764.5" y2="287.58" stroke="#c9cab8" stroke-width="1"/><line x1="115" y1="300.20" x2="764.5" y2="300.20" stroke="#c9cab8" stroke-width="1"/><line x1="115" y1="306.52" x2="764.5" y2="306.52" stroke="#c9cab8" stroke-width="1"/><line x1="115" y1="312.83" x2="764.5" y2="312.83" stroke="#c9cab8" stroke-width="1"/><line x1="115" y1="319.14" x2="764.5" y2="319.14" stroke="#c9cab8" stroke-width="1"/><line x1="115" y1="325.45" x2="764.5" y2="325.45" stroke="#c9cab8" stroke-width="1"/><line x1="115" y1="331.77" x2="764.5" y2="331.77" stroke="#c9cab8" stroke-width="1"/><line x1="115" y1="338.08" x2="764.5" y2="338.08" stroke="#c9cab8" stroke-width="1"/><line x1="115" y1="344.39" x2="764.5" y2="344.39" stroke="#c9cab8" stroke-width="1"/><line x1="115" y1="350.71" x2="764.5" y2="350.71" stroke="#c9cab8" stroke-width="1"/><line x1="115" y1="363.33" x2="764.5" y2="363.33" stroke="#c9cab8" stroke-width="1"/><line x1="115" y1="369.65" x2="764.5" y2="369.65" stroke="#c9cab8" stroke-width="1"/><line x1="115" y1="375.96" x2="764.5" y2="375.96" stroke="#c9cab8" stroke-width="1"/><line x1="115" y1="382.27" x2="764.5" y2="382.27" stroke="#c9cab8" stroke-width="1"/><line x1="115" y1="388.58" x2="764.5" y2="388.58" stroke="#c9cab8" stroke-width="1"/><line x1="115" y1="394.90" x2="764.5" y2="394.90" stroke="#c9cab8" stroke-width="1"/><line x1="115" y1="401.21" x2="764.5" y2="401.21" stroke="#c9cab8" stroke-width="1"/><line x1="115" y1="407.52" x2="764.5" y2="407.52" stroke="#c9cab8" stroke-width="1"/><line x1="115" y1="413.84" x2="764.5" y2="413.84" stroke="#c9cab8" stroke-width="1"/><line x1="115" y1="426.46" x2="764.5" y2="426.46" stroke="#c9cab8" stroke-width="1"/><line x1="115" y1="432.78" x2="764.5" y2="432.78" stroke="#c9cab8" stroke-width="1"/><line x1="115" y1="439.09" x2="764.5" y2="439.09" stroke="#c9cab8" stroke-width="1"/><line x1="115" y1="445.40" x2="764.5" y2="445.40" stroke="#c9cab8" stroke-width="1"/><line x1="115" y1="451.71" x2="764.5" y2="451.71" stroke="#c9cab8" stroke-width="1"/><line x1="115" y1="458.03" x2="764.5" y2="458.03" stroke="#c9cab8" stroke-width="1"/><line x1="115" y1="464.34" x2="764.5" y2="464.34" stroke="#c9cab8" stroke-width="1"/><line x1="115" y1="470.65" x2="764.5" y2="470.65" stroke="#c9cab8" stroke-width="1"/><line x1="115" y1="476.97" x2="764.5" y2="476.97" stroke="#c9cab8" stroke-width="1"/><line x1="115" y1="489.59" x2="764.5" y2="489.59" stroke="#c9cab8" stroke-width="1"/><line x1="115" y1="495.91" x2="764.5" y2="495.91" stroke="#c9cab8" stroke-width="1"/><line x1="115" y1="502.22" x2="764.5" y2="502.22" stroke="#c9cab8" stroke-width="1"/><line x1="115" y1="508.53" x2="764.5" y2="508.53" stroke="#c9cab8" stroke-width="1"/><line x1="115" y1="514.85" x2="764.5" y2="514.85" stroke="#c9cab8" stroke-width="1"/><line x1="115" y1="521.16" x2="764.5" y2="521.16" stroke="#c9cab8" stroke-width="1"/><line x1="115" y1="527.47" x2="764.5" y2="527.47" stroke="#c9cab8" stroke-width="1"/><line x1="124.20" y1="57" x2="124.20" y2="530.5" stroke="#b0b29e" stroke-width="1"/><line x1="187.33" y1="57" x2="187.33" y2="530.5" stroke="#b0b29e" stroke-width="1"/><line x1="250.46" y1="57" x2="250.46" y2="530.5" stroke="#b0b29e" stroke-width="1"/><line x1="313.59" y1="57" x2="313.59" y2="530.5" stroke="#b0b29e" stroke-width="1"/><line x1="376.72" y1="57" x2="376.72" y2="530.5" stroke="#b0b29e" stroke-width="1"/><line x1="439.85" y1="57" x2="439.85" y2="530.5" stroke="#b0b29e" stroke-width="1"/><line x1="502.98" y1="57" x2="502.98" y2="530.5" stroke="#b0b29e" stroke-width="1"/><line x1="566.11" y1="57" x2="566.11" y2="530.5" stroke="#b0b29e" stroke-width="1"/><line x1="629.24" y1="57" x2="629.24" y2="530.5" stroke="#b0b29e" stroke-width="1"/><line x1="692.37" y1="57" x2="692.37" y2="530.5" stroke="#b0b29e" stroke-width="1"/><line x1="755.50" y1="57" x2="755.50" y2="530.5" stroke="#b0b29e" stroke-width="1"/><line x1="115" y1="104.50" x2="764.5" y2="104.50" stroke="#b0b29e" stroke-width="1"/><line x1="115" y1="167.63" x2="764.5" y2="167.63" stroke="#b0b29e" stroke-width="1"/><line x1="115" y1="230.76" x2="764.5" y2="230.76" stroke="#b0b29e" stroke-width="1"/><line x1="115" y1="293.89" x2="764.5" y2="293.89" stroke="#b0b29e" stroke-width="1"/><line x1="115" y1="357.02" x2="764.5" y2="357.02" stroke="#b0b29e" stroke-width="1"/><line x1="115" y1="420.15" x2="764.5" y2="420.15" stroke="#b0b29e" stroke-width="1"/><line x1="115" y1="483.28" x2="764.5" y2="483.28" stroke="#b0b29e" stroke-width="1"/></g><rect x="115" y="57" width="649.5" height="473.5" fill="none" stroke="#404040" stroke-width="1"/><rect x="124.2" y="73.3" width="631.3" height="441.4" fill="none" stroke="#2828e0" stroke-width="1.2"/><rect x="570" y="300.5" width="27.5" height="50.5" fill="#dcdac4" stroke="#b05050" stroke-width="0.9"/><rect x="578" y="310" width="13.5" height="32" fill="#081808" /><path d="M586 313 Q590 313 588 316 Q586 319 591 318" fill="none" stroke="#e8e020" stroke-width="1.2"/><path d="M586 322 L589 325" stroke="#2040e0" stroke-width="1.2"/><path d="M586 328 Q590 328 588 331 Q586 334 591 333" fill="none" stroke="#e02020" stroke-width="1.2"/><path d="M590 336 L587 338.5 L590 341" fill="none" stroke="#20c020" stroke-width="1.2"/><text x="598.5" y="162.5" font-size="7.6" fill="#202020" text-anchor="end" font-weight="bold" >BAT1</text><text x="588.5" y="168.2" font-size="5.5" fill="#303030" text-anchor="end" font-weight="bold" >9V</text><text x="598.5" y="174.8" font-size="5.2" fill="#a8a69a" text-anchor="end" font-weight="normal" >&lt;TEXT&gt;</text><rect x="63" y="55.2" width="522.3" height="336.8" fill="#0846d8"/><rect x="63" y="55.2" width="522.3" height="15.7" fill="url(#gTitle)"/><line x1="63.5" y1="55.2" x2="63.5" y2="392" stroke="#1a5ae8" stroke-width="1" /><text x="64.9" y="67.3" font-size="8.8" fill="#ffffff" text-anchor="start" font-weight="bold" textLength="80.90" lengthAdjust="spacingAndGlyphs" >Digital Oscilloscope</text><rect x="572.2" y="59.1" width="9.5" height="9.3" rx="1.2" fill="url(#gXPclose)" stroke="#fff" stroke-width="0.7"/><path d="M574.6 61.5 L579.3 66.1 M579.3 61.5 L574.6 66.1" stroke="#fff" stroke-width="1.5"/><rect x="66" y="70.9" width="516.7" height="318.3" fill="#b4b4b4" /><rect x="66" y="70.9" width="305.8" height="305.1" fill="#a8a8a8" /><line x1="66" y1="71.4" x2="371" y2="71.4" stroke="#888" stroke-width="1" /><rect x="67.9" y="73" width="300.7" height="301" fill="#000" /><line x1="68.27" y1="73" x2="68.27" y2="374" stroke="#0a420a" stroke-width="1.1"/><line x1="83.30" y1="73" x2="83.30" y2="374" stroke="#0a420a" stroke-width="1.1"/><line x1="98.33" y1="73" x2="98.33" y2="374" stroke="#0a420a" stroke-width="1.1"/><line x1="113.36" y1="73" x2="113.36" y2="374" stroke="#0a420a" stroke-width="1.1"/><line x1="128.39" y1="73" x2="128.39" y2="374" stroke="#0a420a" stroke-width="1.1"/><line x1="143.42" y1="73" x2="143.42" y2="374" stroke="#0a420a" stroke-width="1.1"/><line x1="158.45" y1="73" x2="158.45" y2="374" stroke="#0a420a" stroke-width="1.1"/><line x1="173.48" y1="73" x2="173.48" y2="374" stroke="#0a420a" stroke-width="1.1"/><line x1="188.51" y1="73" x2="188.51" y2="374" stroke="#0a420a" stroke-width="1.1"/><line x1="203.54" y1="73" x2="203.54" y2="374" stroke="#0a420a" stroke-width="1.1"/><line x1="218.57" y1="73" x2="218.57" y2="374" stroke="#0a420a" stroke-width="1.1"/><line x1="233.60" y1="73" x2="233.60" y2="374" stroke="#0a420a" stroke-width="1.1"/><line x1="248.63" y1="73" x2="248.63" y2="374" stroke="#0a420a" stroke-width="1.1"/><line x1="263.66" y1="73" x2="263.66" y2="374" stroke="#0a420a" stroke-width="1.1"/><line x1="278.69" y1="73" x2="278.69" y2="374" stroke="#0a420a" stroke-width="1.1"/><line x1="293.72" y1="73" x2="293.72" y2="374" stroke="#0a420a" stroke-width="1.1"/><line x1="308.75" y1="73" x2="308.75" y2="374" stroke="#0a420a" stroke-width="1.1"/><line x1="323.78" y1="73" x2="323.78" y2="374" stroke="#0a420a" stroke-width="1.1"/><line x1="338.81" y1="73" x2="338.81" y2="374" stroke="#0a420a" stroke-width="1.1"/><line x1="353.84" y1="73" x2="353.84" y2="374" stroke="#0a420a" stroke-width="1.1"/><line x1="67.9" y1="73.45" x2="368.6" y2="73.45" stroke="#0a420a" stroke-width="1.1"/><line x1="67.9" y1="88.50" x2="368.6" y2="88.50" stroke="#0a420a" stroke-width="1.1"/><line x1="67.9" y1="103.55" x2="368.6" y2="103.55" stroke="#0a420a" stroke-width="1.1"/><line x1="67.9" y1="118.60" x2="368.6" y2="118.60" stroke="#0a420a" stroke-width="1.1"/><line x1="67.9" y1="133.65" x2="368.6" y2="133.65" stroke="#0a420a" stroke-width="1.1"/><line x1="67.9" y1="148.70" x2="368.6" y2="148.70" stroke="#0a420a" stroke-width="1.1"/><line x1="67.9" y1="163.75" x2="368.6" y2="163.75" stroke="#0a420a" stroke-width="1.1"/><line x1="67.9" y1="178.80" x2="368.6" y2="178.80" stroke="#0a420a" stroke-width="1.1"/><line x1="67.9" y1="193.85" x2="368.6" y2="193.85" stroke="#0a420a" stroke-width="1.1"/><line x1="67.9" y1="208.90" x2="368.6" y2="208.90" stroke="#0a420a" stroke-width="1.1"/><line x1="67.9" y1="223.95" x2="368.6" y2="223.95" stroke="#0a420a" stroke-width="1.1"/><line x1="67.9" y1="239.00" x2="368.6" y2="239.00" stroke="#0a420a" stroke-width="1.1"/><line x1="67.9" y1="254.05" x2="368.6" y2="254.05" stroke="#0a420a" stroke-width="1.1"/><line x1="67.9" y1="269.10" x2="368.6" y2="269.10" stroke="#0a420a" stroke-width="1.1"/><line x1="67.9" y1="284.15" x2="368.6" y2="284.15" stroke="#0a420a" stroke-width="1.1"/><line x1="67.9" y1="299.20" x2="368.6" y2="299.20" stroke="#0a420a" stroke-width="1.1"/><line x1="67.9" y1="314.25" x2="368.6" y2="314.25" stroke="#0a420a" stroke-width="1.1"/><line x1="67.9" y1="329.30" x2="368.6" y2="329.30" stroke="#0a420a" stroke-width="1.1"/><line x1="67.9" y1="344.35" x2="368.6" y2="344.35" stroke="#0a420a" stroke-width="1.1"/><line x1="67.9" y1="359.40" x2="368.6" y2="359.40" stroke="#0a420a" stroke-width="1.1"/><line x1="218.3" y1="73" x2="218.3" y2="374" stroke="#8a8a8a" stroke-width="1" stroke-dasharray="2,2"/><path d="M67.9 126 H96.7 V141 H218.2 V126 H243" fill="none" stroke="#c8b010" stroke-width="1.3"/><polyline points="67.90,206.39 68.40,208.99 68.90,210.99 69.40,212.30 69.90,212.88 70.40,212.68 70.90,211.73 71.40,210.07 71.90,207.76 72.40,204.90 72.90,201.61 73.40,198.05 73.90,194.35 74.40,190.68 74.90,187.20 75.40,184.05 75.90,181.37 76.40,179.27 76.90,177.85 77.40,177.16 77.90,177.24 78.40,178.08 78.90,179.64 79.40,181.86 79.90,184.64 80.40,187.87 80.90,191.41 81.40,195.09 81.90,198.78 82.40,202.30 82.90,205.51 83.40,208.26 83.90,210.46 84.40,211.98 84.90,212.78 85.40,212.82 85.90,212.10 86.40,210.64 86.90,208.51 87.40,205.80 87.90,202.63 88.40,199.14 88.90,195.46 89.40,191.77 89.90,188.21 90.40,184.95 90.90,182.12 91.40,179.83 91.90,178.20 92.40,177.29 92.90,177.13 93.40,177.75 93.90,179.10 94.40,181.13 94.90,183.76 95.40,186.87 95.90,190.32 96.40,193.98 96.90,197.68 97.40,201.27 97.90,204.59 98.40,207.49 98.90,209.86 99.40,211.60 99.90,212.62 100.40,212.89 100.90,212.39 101.40,211.15 101.90,209.22 102.40,206.67 102.90,203.63 103.40,200.21 103.90,196.58 104.40,192.87 104.90,189.26 105.40,185.89 105.90,182.91 106.40,180.45 106.90,178.62 107.40,177.48 107.90,177.10 108.40,177.48 108.90,178.62 109.40,180.45 109.90,182.91 110.40,185.89 110.90,189.26 111.40,192.87 111.90,196.58 112.40,200.21 112.90,203.63 113.40,206.67 113.90,209.22 114.40,211.15 114.90,212.39 115.40,212.89 115.90,212.62 116.40,211.60 116.90,209.86 117.40,207.49 117.90,204.59 118.40,201.27 118.90,197.68 119.40,193.98 119.90,190.32 120.40,186.87 120.90,183.76 121.40,181.13 121.90,179.10 122.40,177.75 122.90,177.13 123.40,177.29 123.90,178.20 124.40,179.83 124.90,182.12 125.40,184.95 125.90,188.21 126.40,191.77 126.90,195.46 127.40,199.14 127.90,202.63 128.40,205.80 128.90,208.51 129.40,210.64 129.90,212.10 130.40,212.82 130.90,212.78 131.40,211.98 131.90,210.46 132.40,208.26 132.90,205.51 133.40,202.30 133.90,198.78 134.40,195.09 134.90,191.41 135.40,187.87 135.90,184.64 136.40,181.86 136.90,179.64 137.40,178.08 137.90,177.24 138.40,177.16 138.90,177.85 139.40,179.27 139.90,181.37 140.40,184.05 140.90,187.20 141.40,190.68 141.90,194.35 142.40,198.05 142.90,201.61 143.40,204.90 143.90,207.76 144.40,210.07 144.90,211.73 145.40,212.68 145.90,212.88 146.40,212.30 146.90,210.99 147.40,208.99 147.90,206.39 148.40,203.30 148.90,199.86 149.40,196.21 149.90,192.50 150.40,188.91 150.90,185.57 151.40,182.64 151.90,180.24 152.40,178.47 152.90,177.41 153.40,177.10 153.90,177.56 154.40,178.77 154.90,180.67 155.40,183.19 155.90,186.21 156.40,189.61 156.90,193.24 157.40,196.94 157.90,200.57 158.40,203.95 158.90,206.95 159.40,209.44 159.90,211.31 160.40,212.48 160.90,212.90 161.40,212.55 161.90,211.46 162.40,209.65 162.90,207.22 163.40,204.27 163.90,200.92 164.40,197.31 164.90,193.61 165.40,189.97 165.90,186.54 166.40,183.47 166.90,180.90 167.40,178.93 167.90,177.65 168.40,177.12 168.90,177.35 169.40,178.33 169.90,180.03 170.40,182.38 170.90,185.26 171.40,188.56 171.90,192.14 172.40,195.83 172.90,199.50 173.40,202.97 173.90,206.10 174.40,208.75 174.90,210.82 175.40,212.20 175.90,212.85 176.40,212.74 176.90,211.86 177.40,210.26 177.90,208.01 178.40,205.20 178.90,201.96 179.40,198.41 179.90,194.72 180.40,191.04 180.90,187.53 181.40,184.34 181.90,181.61 182.40,179.45 182.90,177.96 183.40,177.20 183.90,177.20 184.40,177.96 184.90,179.45 185.40,181.61 185.90,184.34 186.40,187.53 186.90,191.04 187.40,194.72 187.90,198.41 188.40,201.96 188.90,205.20 189.40,208.01 189.90,210.26 190.40,211.86 190.90,212.74 191.40,212.85 191.90,212.20 192.40,210.82 192.90,208.75 193.40,206.10 193.90,202.97 194.40,199.50 194.90,195.83 195.40,192.14 195.90,188.56 196.40,185.26 196.90,182.38 197.40,180.03 197.90,178.33 198.40,177.35 198.90,177.12 199.40,177.65 199.90,178.93 200.40,180.90 200.90,183.47 201.40,186.54 201.90,189.97 202.40,193.61 202.90,197.31 203.40,200.92 203.90,204.27 204.40,207.22 204.90,209.65 205.40,211.46 205.90,212.55 206.40,212.90 206.90,212.48 207.40,211.31 207.90,209.44 208.40,206.95 208.90,203.95 209.40,200.57 209.90,196.94 210.40,193.24 210.90,189.61 211.40,186.21 211.90,183.19 212.40,180.67 212.90,178.77 213.40,177.56 213.90,177.10 214.40,177.41 214.90,178.47 215.40,180.24 215.90,182.64 216.40,185.57 216.90,188.91 217.40,192.50 217.90,196.21 218.40,199.86 218.90,203.30 219.40,206.39 219.90,208.99 220.40,210.99 220.90,212.30 221.40,212.88 221.90,212.68 222.40,211.73 222.90,210.07 223.40,207.76 223.90,204.90 224.40,201.61 224.90,198.05 225.40,194.35 225.90,190.68 226.40,187.20 226.90,184.05 227.40,181.37 227.90,179.27 228.40,177.85 228.90,177.16 229.40,177.24 229.90,178.08 230.40,179.64 230.90,181.86 231.40,184.64 231.90,187.87 232.40,191.41 232.90,195.09 233.40,198.78 233.90,202.30 234.40,205.51 234.90,208.26 235.40,210.46 235.90,211.98 236.40,212.78 236.90,212.82 237.40,212.10 237.90,210.64 238.40,208.51 238.90,205.80 239.40,202.63 239.90,199.14 240.40,195.46 240.90,191.77 241.40,188.21 241.90,184.95 242.40,182.12 242.90,179.83" fill="none" stroke="#2290c8" stroke-width="1.15"/><line x1="67.9" y1="254" x2="243" y2="254" stroke="#b04878" stroke-width="1.3" /><line x1="67.9" y1="314" x2="243" y2="314" stroke="#20a848" stroke-width="1.3" /><rect x="66" y="376" width="303.6" height="12.6" fill="#f4f3ee" /><line x1="66" y1="375.5" x2="369.6" y2="375.5" stroke="#808080" stroke-width="1" /><rect x="66.2" y="376.3" width="12" height="12" fill="#ece9d8" stroke="#c0bdb0" stroke-width="0.6"/><path d="M70.3 382.3 L74 379 V385.6 Z" fill="#000"/><rect x="317" y="376.3" width="24.8" height="12" fill="#ece9d8" stroke="#c0bdb0" stroke-width="0.6"/><rect x="342.2" y="376.3" width="27" height="12" fill="#f6f5f0" stroke="#c0bdb0" stroke-width="0.6"/><path d="M365 382.3 L361.3 379 V385.6 Z" fill="#000"/><rect x="368.6" y="73" width="3.2" height="316" fill="#a0a0a0" /><line x1="369.2" y1="73" x2="369.2" y2="389" stroke="#787878" stroke-width="1" /><line x1="371.3" y1="71" x2="371.3" y2="389" stroke="#d0d0d0" stroke-width="1" /><rect x="372" y="71" width="69.80000000000001" height="158.6" fill="#b4b4b4" /><line x1="372" y1="90.5" x2="441.8" y2="90.5" stroke="#5a5a5a" stroke-width="1" /><line x1="372" y1="91.5" x2="441.8" y2="91.5" stroke="#d4d4d4" stroke-width="1" /><line x1="372.5" y1="71" x2="372.5" y2="229.6" stroke="#d4d4d4" stroke-width="1" /><line x1="441.3" y1="71" x2="441.3" y2="229.6" stroke="#5a5a5a" stroke-width="1" /><text x="403.9" y="85.2" font-size="9.9" fill="#f08aa0" text-anchor="middle" font-weight="bold" textLength="28.99" lengthAdjust="spacingAndGlyphs" >Trigger</text><text x="394.8" y="98.7" font-size="7.5" fill="#424242" text-anchor="middle" font-weight="normal" textLength="16.14" lengthAdjust="spacingAndGlyphs"  stroke="#424242" stroke-width="0.16">Level</text><rect x="380.2" y="101" width="29.5" height="59.8" fill="#c4c4c4" stroke="#484848" stroke-width="0.9"/><rect x="385.2" y="102.9" width="19.1" height="56" fill="url(#gDrumV)"/><rect x="385.2" y="102.9" width="19.1" height="56" fill="url(#gEdgeV)"/><line x1="385.2" y1="102.9" x2="385.2" y2="158.9" stroke="#404040" stroke-width="0.9" /><line x1="404.3" y1="102.9" x2="404.3" y2="158.9" stroke="#404040" stroke-width="0.9" /><path d="M385.7 105.0 h2.2 M403.8 105.0 h-2.2 M385.7 107.3 h1.2 M403.8 107.3 h-1.2 M385.7 109.7 h1.2 M403.8 109.7 h-1.2 M385.7 112.0 h1.2 M403.8 112.0 h-1.2 M385.7 114.4 h1.2 M403.8 114.4 h-1.2 M385.7 116.8 h2.2 M403.8 116.8 h-2.2 M385.7 119.1 h1.2 M403.8 119.1 h-1.2 M385.7 121.5 h1.2 M403.8 121.5 h-1.2 M385.7 123.8 h1.2 M403.8 123.8 h-1.2 M385.7 126.2 h1.2 M403.8 126.2 h-1.2 M385.7 128.5 h2.2 M403.8 128.5 h-2.2 M385.7 130.8 h1.2 M403.8 130.8 h-1.2 M385.7 133.2 h1.2 M403.8 133.2 h-1.2 M385.7 135.6 h1.2 M403.8 135.6 h-1.2 M385.7 137.9 h1.2 M403.8 137.9 h-1.2 M385.7 140.2 h2.2 M403.8 140.2 h-2.2 M385.7 142.6 h1.2 M403.8 142.6 h-1.2 M385.7 144.9 h1.2 M403.8 144.9 h-1.2 M385.7 147.3 h1.2 M403.8 147.3 h-1.2 M385.7 149.7 h1.2 M403.8 149.7 h-1.2 M385.7 152.0 h2.2 M403.8 152.0 h-2.2 M385.7 154.3 h1.2 M403.8 154.3 h-1.2 M385.7 156.7 h1.2 M403.8 156.7 h-1.2" stroke="#202020" stroke-width="0.5" opacity="0.8"/><text x="395.0" y="117.3" font-size="7.0" fill="#181818" text-anchor="middle" font-weight="normal" letter-spacing="-0.1">-10</text><text x="395.0" y="132.15" font-size="7.0" fill="#181818" text-anchor="middle" font-weight="normal" letter-spacing="-0.1">0</text><text x="395.0" y="147.0" font-size="7.0" fill="#181818" text-anchor="middle" font-weight="normal" letter-spacing="-0.1">10</text><path d="M381.2 127.0 L385.2 129.9 L381.2 132.8 Z M408.5 127.0 L404.3 129.9 L408.5 132.8 Z" fill="#e00000"/><path d="M375.2 121.60000000000001 L378.09999999999997 126.30000000000001 H375.8 V133.5 H378.09999999999997 L375.2 138.20000000000002 L372.3 133.5 H374.59999999999997 V126.30000000000001 H372.3 Z" fill="#e87090" opacity="0.55"/><text x="427.5" y="102.9" font-size="7.5" fill="#424242" text-anchor="end" font-weight="normal" textLength="9.38" lengthAdjust="spacingAndGlyphs"  stroke="#424242" stroke-width="0.16">AC</text><text x="427.5" y="113.3" font-size="7.5" fill="#424242" text-anchor="end" font-weight="normal" textLength="9.75" lengthAdjust="spacingAndGlyphs"  stroke="#424242" stroke-width="0.16">DC</text><rect x="429.5" y="92.6" width="9.8" height="24.8" fill="#c8c8c8" stroke="#5a5a5a" stroke-width="0.8"/><line x1="430.5" y1="116.8" x2="438.9" y2="116.8" stroke="#7a7a7a" stroke-width="0.8" /><rect x="430.5" y="105.39999999999999" width="7.8" height="11" fill="#d8d8d8" stroke="#808080" stroke-width="0.5"/><line x1="431.5" y1="107.39999999999999" x2="437.3" y2="107.39999999999999" stroke="#707070" stroke-width="0.6" /><line x1="431.5" y1="109.6" x2="437.3" y2="109.6" stroke="#707070" stroke-width="0.6" /><line x1="431.5" y1="111.8" x2="437.3" y2="111.8" stroke="#707070" stroke-width="0.6" /><line x1="431.5" y1="113.99999999999999" x2="437.3" y2="113.99999999999999" stroke="#707070" stroke-width="0.6" /><rect x="433.7" y="95.6" width="1.6" height="8.8" fill="#202020" /><rect x="429.5" y="127.2" width="9.8" height="23.6" fill="#c8c8c8" stroke="#5a5a5a" stroke-width="0.8"/><line x1="430.5" y1="150.20000000000002" x2="438.9" y2="150.20000000000002" stroke="#7a7a7a" stroke-width="0.8" /><rect x="430.5" y="128.2" width="7.8" height="10.5" fill="#d8d8d8" stroke="#808080" stroke-width="0.5"/><line x1="431.5" y1="130.2" x2="437.3" y2="130.2" stroke="#707070" stroke-width="0.6" /><line x1="431.5" y1="132.39999999999998" x2="437.3" y2="132.39999999999998" stroke="#707070" stroke-width="0.6" /><line x1="431.5" y1="134.6" x2="437.3" y2="134.6" stroke="#707070" stroke-width="0.6" /><line x1="431.5" y1="136.79999999999998" x2="437.3" y2="136.79999999999998" stroke="#707070" stroke-width="0.6" /><rect x="433.7" y="140.2" width="1.6" height="7.600000000000001" fill="#202020" /><path d="M427.3 130 H424.6 V137 L422.6 139.2 M422.9 141.3 V147.6 H426.8" fill="none" stroke="#3a3a3a" stroke-width="1"/><text x="427" y="169.5" font-size="7.5" fill="#424242" text-anchor="end" font-weight="normal" textLength="13.89" lengthAdjust="spacingAndGlyphs"  stroke="#424242" stroke-width="0.16">Auto</text><rect x="429" y="161" width="10.8" height="10.1" fill="#f2c4c4" stroke="#8a6a6a" stroke-width="0.5"/><rect x="431" y="163" width="6.800000000000001" height="6.1" fill="#ffe4e4" /><text x="427" y="180.9" font-size="7.5" fill="#424242" text-anchor="end" font-weight="normal" textLength="28.89" lengthAdjust="spacingAndGlyphs"  stroke="#424242" stroke-width="0.16">One-Shot</text><rect x="429" y="173.1" width="10.8" height="10.1" fill="url(#gBtn)" stroke="#404040" stroke-width="0.5"/><text x="427" y="192.6" font-size="7.5" fill="#424242" text-anchor="end" font-weight="normal" textLength="23.63" lengthAdjust="spacingAndGlyphs"  stroke="#424242" stroke-width="0.16">Cursors</text><rect x="429" y="185.2" width="10.8" height="10.1" fill="url(#gBtn)" stroke="#404040" stroke-width="0.5"/><text x="405.6" y="207.7" font-size="7.5" fill="#424242" text-anchor="middle" font-weight="normal" textLength="21.39" lengthAdjust="spacingAndGlyphs"  stroke="#424242" stroke-width="0.16">Source</text><text x="391.2" y="215.9" font-size="6.4" fill="#e8e820" text-anchor="middle" font-weight="bold" >A</text><text x="401.9" y="215.9" font-size="6.4" fill="#30a0e0" text-anchor="middle" font-weight="bold" >B</text><text x="412.7" y="215.9" font-size="6.4" fill="#e03090" text-anchor="middle" font-weight="bold" >C</text><text x="423.7" y="215.9" font-size="6.4" fill="#20a060" text-anchor="middle" font-weight="bold" >D</text><rect x="381.8" y="217.4" width="47.9" height="9.4" fill="#c8c8c8" stroke="#484848" stroke-width="0.8"/><line x1="394" y1="222" x2="427" y2="222" stroke="#202020" stroke-width="1.6" /><rect x="382.5" y="218.2" width="11.5" height="7.8" fill="#dcdcdc" stroke="#606060" stroke-width="0.5"/><line x1="384.5" y1="219.5" x2="384.5" y2="224.8" stroke="#606060" stroke-width="0.6" /><line x1="386.7" y1="219.5" x2="386.7" y2="224.8" stroke="#606060" stroke-width="0.6" /><line x1="388.9" y1="219.5" x2="388.9" y2="224.8" stroke="#606060" stroke-width="0.6" /><line x1="391.1" y1="219.5" x2="391.1" y2="224.8" stroke="#606060" stroke-width="0.6" /><rect x="442.5" y="71" width="70.79999999999995" height="158.6" fill="#b4b4b4" /><line x1="442.5" y1="90.5" x2="513.3" y2="90.5" stroke="#5a5a5a" stroke-width="1" /><line x1="442.5" y1="91.5" x2="513.3" y2="91.5" stroke="#d4d4d4" stroke-width="1" /><line x1="443.0" y1="71" x2="443.0" y2="229.6" stroke="#d4d4d4" stroke-width="1" /><line x1="512.8" y1="71" x2="512.8" y2="229.6" stroke="#5a5a5a" stroke-width="1" /><text x="476.4" y="85.2" font-size="9.9" fill="#f4f020" text-anchor="middle" font-weight="bold" textLength="41.98" lengthAdjust="spacingAndGlyphs" >Channel A</text><text x="465.1" y="98.4" font-size="7.5" fill="#424242" text-anchor="middle" font-weight="normal" textLength="24.01" lengthAdjust="spacingAndGlyphs"  stroke="#424242" stroke-width="0.16">Position</text><rect x="451.2" y="100.9" width="29.5" height="59.8" fill="#c4c4c4" stroke="#484848" stroke-width="0.9"/><rect x="456.2" y="102.80000000000001" width="19.1" height="56" fill="url(#gDrumV)"/><rect x="456.2" y="102.80000000000001" width="19.1" height="56" fill="url(#gEdgeV)"/><line x1="456.2" y1="102.80000000000001" x2="456.2" y2="158.8" stroke="#404040" stroke-width="0.9" /><line x1="475.3" y1="102.80000000000001" x2="475.3" y2="158.8" stroke="#404040" stroke-width="0.9" /><path d="M456.7 104.9 h2.2 M474.8 104.9 h-2.2 M456.7 107.2 h1.2 M474.8 107.2 h-1.2 M456.7 109.6 h1.2 M474.8 109.6 h-1.2 M456.7 112.0 h1.2 M474.8 112.0 h-1.2 M456.7 114.3 h1.2 M474.8 114.3 h-1.2 M456.7 116.7 h2.2 M474.8 116.7 h-2.2 M456.7 119.0 h1.2 M474.8 119.0 h-1.2 M456.7 121.4 h1.2 M474.8 121.4 h-1.2 M456.7 123.7 h1.2 M474.8 123.7 h-1.2 M456.7 126.1 h1.2 M474.8 126.1 h-1.2 M456.7 128.4 h2.2 M474.8 128.4 h-2.2 M456.7 130.8 h1.2 M474.8 130.8 h-1.2 M456.7 133.1 h1.2 M474.8 133.1 h-1.2 M456.7 135.5 h1.2 M474.8 135.5 h-1.2 M456.7 137.8 h1.2 M474.8 137.8 h-1.2 M456.7 140.2 h2.2 M474.8 140.2 h-2.2 M456.7 142.5 h1.2 M474.8 142.5 h-1.2 M456.7 144.9 h1.2 M474.8 144.9 h-1.2 M456.7 147.2 h1.2 M474.8 147.2 h-1.2 M456.7 149.6 h1.2 M474.8 149.6 h-1.2 M456.7 151.9 h2.2 M474.8 151.9 h-2.2 M456.7 154.2 h1.2 M474.8 154.2 h-1.2 M456.7 156.6 h1.2 M474.8 156.6 h-1.2" stroke="#202020" stroke-width="0.5" opacity="0.8"/><text x="466.0" y="117.2" font-size="7.0" fill="#181818" text-anchor="middle" font-weight="normal" letter-spacing="-0.1">110</text><text x="466.0" y="132.05" font-size="7.0" fill="#181818" text-anchor="middle" font-weight="normal" letter-spacing="-0.1">120</text><text x="466.0" y="146.9" font-size="7.0" fill="#181818" text-anchor="middle" font-weight="normal" letter-spacing="-0.1">130</text><path d="M452.2 126.9 L456.2 129.8 L452.2 132.70000000000002 Z M479.5 126.9 L475.3 129.8 L479.5 132.70000000000002 Z" fill="#e00000"/><path d="M446.2 121.50000000000001 L449.09999999999997 126.20000000000002 H446.8 V133.4 H449.09999999999997 L446.2 138.10000000000002 L443.3 133.4 H445.59999999999997 V126.20000000000002 H443.3 Z" fill="#f4f020" opacity="1"/><text x="498.5" y="103.1" font-size="7.5" fill="#424242" text-anchor="end" font-weight="normal" textLength="9.38" lengthAdjust="spacingAndGlyphs"  stroke="#424242" stroke-width="0.16">AC</text><text x="498.5" y="113.69999999999999" font-size="7.5" fill="#424242" text-anchor="end" font-weight="normal" textLength="9.75" lengthAdjust="spacingAndGlyphs"  stroke="#424242" stroke-width="0.16">DC</text><text x="498.5" y="124.3" font-size="7.5" fill="#424242" text-anchor="end" font-weight="normal" textLength="15.00" lengthAdjust="spacingAndGlyphs"  stroke="#424242" stroke-width="0.16">GND</text><text x="498.5" y="134.89999999999998" font-size="7.5" fill="#424242" text-anchor="end" font-weight="normal" textLength="13.50" lengthAdjust="spacingAndGlyphs"  stroke="#424242" stroke-width="0.16">OFF</text><rect x="500.8" y="93.3" width="9.8" height="46.4" fill="#c8c8c8" stroke="#5a5a5a" stroke-width="0.8"/><line x1="501.8" y1="139.1" x2="510.2" y2="139.1" stroke="#7a7a7a" stroke-width="0.8" /><rect x="501.8" y="94.3" width="7.8" height="10.5" fill="#d8d8d8" stroke="#808080" stroke-width="0.5"/><line x1="502.8" y1="96.3" x2="508.6" y2="96.3" stroke="#707070" stroke-width="0.6" /><line x1="502.8" y1="98.5" x2="508.6" y2="98.5" stroke="#707070" stroke-width="0.6" /><line x1="502.8" y1="100.7" x2="508.6" y2="100.7" stroke="#707070" stroke-width="0.6" /><line x1="502.8" y1="102.89999999999999" x2="508.6" y2="102.89999999999999" stroke="#707070" stroke-width="0.6" /><rect x="505.0" y="106.3" width="1.6" height="30.4" fill="#202020" /><text x="498.5" y="149.2" font-size="7.5" fill="#424242" text-anchor="end" font-weight="normal" textLength="16.88" lengthAdjust="spacingAndGlyphs"  stroke="#424242" stroke-width="0.16">Invert</text><rect x="500.4" y="142.3" width="9.6" height="9.5" fill="url(#gBtn)" stroke="#404040" stroke-width="0.5"/><text x="498.5" y="161.3" font-size="7.5" fill="#424242" text-anchor="end" font-weight="normal" textLength="12.95" lengthAdjust="spacingAndGlyphs"  stroke="#424242" stroke-width="0.16">A+B</text><rect x="500.4" y="153.7" width="9.6" height="10.2" fill="url(#gBtn)" stroke="#404040" stroke-width="0.5"/><path d="M445.2 228.2 V194.9 A33.2 33.2 0 0 1 511.6 194.9 V228.2 Z" fill="#ffffff" stroke="#6a6a6a" stroke-width="0.8"/><path d="M489.4 173.9 L493.7 165.4 L497.7 167.70000000000002 L493.09999999999997 175.9" fill="#b0b0b0" stroke="#7a7a7a" stroke-width="0.6"/><rect x="464.09999999999997" y="212.4" width="27.6" height="15.799999999999983" fill="#b4b4b4" stroke="#7a7a7a" stroke-width="0.6"/><path d="M466.65 214.39 L465.25 216.81 M461.99 210.81 L460.01 212.79 M458.41 206.15 L455.99 207.55 M456.17 200.72 L453.46 201.45 M455.40 194.90 L452.60 194.90 M456.17 189.08 L453.46 188.35 M458.41 183.65 L455.99 182.25 M461.99 178.99 L460.01 177.01 M466.65 175.41 L465.25 172.99 M472.08 173.17 L471.35 170.46 M477.90 172.40 L477.90 169.60 M483.72 173.17 L484.45 170.46 M489.15 175.41 L490.55 172.99 M493.81 178.99 L495.79 177.01 M497.39 183.65 L499.81 182.25 M499.63 189.08 L502.34 188.35 M500.40 194.90 L503.20 194.90 M499.63 200.72 L502.34 201.45 M497.39 206.15 L499.81 207.55 M493.81 210.81 L495.79 212.79 M489.15 214.39 L490.55 216.81" stroke="#303030" stroke-width="0.7"/><text x="457.4" y="177.0" font-size="5.4" fill="#4a4a4a" text-anchor="middle" font-weight="normal" >1</text><text x="451.2" y="187.10000000000002" font-size="5.4" fill="#4a4a4a" text-anchor="middle" font-weight="normal" >2</text><text x="448.79999999999995" y="197.20000000000002" font-size="5.4" fill="#4a4a4a" text-anchor="middle" font-weight="normal" >5</text><text x="450.5" y="208.3" font-size="5.4" fill="#4a4a4a" text-anchor="middle" font-weight="normal" >10</text><text x="456.29999999999995" y="217.60000000000002" font-size="5.4" fill="#4a4a4a" text-anchor="middle" font-weight="normal" >20</text><text x="467.29999999999995" y="170.3" font-size="5.4" fill="#4a4a4a" text-anchor="middle" font-weight="normal" >0.5</text><text x="478.09999999999997" y="168.3" font-size="5.4" fill="#4a4a4a" text-anchor="middle" font-weight="normal" >0.2</text><text x="487.5" y="170.3" font-size="5.4" fill="#4a4a4a" text-anchor="middle" font-weight="normal" >0.1</text><text x="499.5" y="177.0" font-size="5.4" fill="#4a4a4a" text-anchor="middle" font-weight="normal" >50</text><text x="506.29999999999995" y="187.10000000000002" font-size="5.4" fill="#4a4a4a" text-anchor="middle" font-weight="normal" >20</text><text x="506.9" y="197.20000000000002" font-size="5.4" fill="#4a4a4a" text-anchor="middle" font-weight="normal" >10</text><text x="504.9" y="208.3" font-size="5.4" fill="#4a4a4a" text-anchor="middle" font-weight="normal" >5</text><text x="498.2" y="217.3" font-size="5.4" fill="#4a4a4a" text-anchor="middle" font-weight="normal" >2</text><text x="453.3" y="225.5" font-size="7.6" fill="#404040" text-anchor="middle" font-weight="normal" >V</text><text x="502.40000000000003" y="225.5" font-size="7.6" fill="#404040" text-anchor="middle" font-weight="normal" >mV</text><circle cx="477.9" cy="194.9" r="22" fill="url(#gKnob)"/><circle cx="477.9" cy="194.9" r="22" fill="url(#gKnobEdge)"/><circle cx="478.79999999999995" cy="195.8" r="11.6" fill="#202020" opacity="0.55"/><circle cx="477.9" cy="194.9" r="11" fill="url(#gCap)"/><path d="M457.4 194.9 L464.9 190.70000000000002 L464.9 199.1 Z" fill="#f4f020"/><path d="M487.4 202.4 L481.4 201.20000000000002 L483.9 197.9 Z" fill="#f4f020"/><rect x="464.7" y="218.9" width="26.8" height="8.8" fill="#ffffff" stroke="#6a6a6a" stroke-width="0.8"/><text x="465.9" y="226.1" font-size="7.2" fill="#2020a0" text-anchor="start" font-weight="normal" >5</text><rect x="513.0" y="71" width="70.79999999999995" height="158.6" fill="#b4b4b4" /><line x1="513.0" y1="90.5" x2="583.8" y2="90.5" stroke="#5a5a5a" stroke-width="1" /><line x1="513.0" y1="91.5" x2="583.8" y2="91.5" stroke="#d4d4d4" stroke-width="1" /><line x1="513.5" y1="71" x2="513.5" y2="229.6" stroke="#d4d4d4" stroke-width="1" /><line x1="583.3" y1="71" x2="583.3" y2="229.6" stroke="#5a5a5a" stroke-width="1" /><text x="546.9" y="85.2" font-size="9.9" fill="#e8308c" text-anchor="middle" font-weight="bold" textLength="42.30" lengthAdjust="spacingAndGlyphs" >Channel C</text><text x="535.6" y="98.4" font-size="7.5" fill="#424242" text-anchor="middle" font-weight="normal" textLength="24.01" lengthAdjust="spacingAndGlyphs"  stroke="#424242" stroke-width="0.16">Position</text><rect x="521.7" y="100.9" width="29.5" height="59.8" fill="#c4c4c4" stroke="#484848" stroke-width="0.9"/><rect x="526.7" y="102.80000000000001" width="19.1" height="56" fill="url(#gDrumV)"/><rect x="526.7" y="102.80000000000001" width="19.1" height="56" fill="url(#gEdgeV)"/><line x1="526.7" y1="102.80000000000001" x2="526.7" y2="158.8" stroke="#404040" stroke-width="0.9" /><line x1="545.8000000000001" y1="102.80000000000001" x2="545.8000000000001" y2="158.8" stroke="#404040" stroke-width="0.9" /><path d="M527.2 104.9 h2.2 M545.3000000000001 104.9 h-2.2 M527.2 107.2 h1.2 M545.3000000000001 107.2 h-1.2 M527.2 109.6 h1.2 M545.3000000000001 109.6 h-1.2 M527.2 112.0 h1.2 M545.3000000000001 112.0 h-1.2 M527.2 114.3 h1.2 M545.3000000000001 114.3 h-1.2 M527.2 116.7 h2.2 M545.3000000000001 116.7 h-2.2 M527.2 119.0 h1.2 M545.3000000000001 119.0 h-1.2 M527.2 121.4 h1.2 M545.3000000000001 121.4 h-1.2 M527.2 123.7 h1.2 M545.3000000000001 123.7 h-1.2 M527.2 126.1 h1.2 M545.3000000000001 126.1 h-1.2 M527.2 128.4 h2.2 M545.3000000000001 128.4 h-2.2 M527.2 130.8 h1.2 M545.3000000000001 130.8 h-1.2 M527.2 133.1 h1.2 M545.3000000000001 133.1 h-1.2 M527.2 135.5 h1.2 M545.3000000000001 135.5 h-1.2 M527.2 137.8 h1.2 M545.3000000000001 137.8 h-1.2 M527.2 140.2 h2.2 M545.3000000000001 140.2 h-2.2 M527.2 142.5 h1.2 M545.3000000000001 142.5 h-1.2 M527.2 144.9 h1.2 M545.3000000000001 144.9 h-1.2 M527.2 147.2 h1.2 M545.3000000000001 147.2 h-1.2 M527.2 149.6 h1.2 M545.3000000000001 149.6 h-1.2 M527.2 151.9 h2.2 M545.3000000000001 151.9 h-2.2 M527.2 154.2 h1.2 M545.3000000000001 154.2 h-1.2 M527.2 156.6 h1.2 M545.3000000000001 156.6 h-1.2" stroke="#202020" stroke-width="0.5" opacity="0.8"/><text x="536.5" y="117.2" font-size="7.0" fill="#181818" text-anchor="middle" font-weight="normal" letter-spacing="-0.1">-50</text><text x="536.5" y="132.05" font-size="7.0" fill="#181818" text-anchor="middle" font-weight="normal" letter-spacing="-0.1">-40</text><text x="536.5" y="146.9" font-size="7.0" fill="#181818" text-anchor="middle" font-weight="normal" letter-spacing="-0.1">-30</text><path d="M522.7 126.9 L526.7 129.8 L522.7 132.70000000000002 Z M550.0 126.9 L545.8000000000001 129.8 L550.0 132.70000000000002 Z" fill="#e00000"/><path d="M516.7 121.50000000000001 L519.6 126.20000000000002 H517.3000000000001 V133.4 H519.6 L516.7 138.10000000000002 L513.8000000000001 133.4 H516.1 V126.20000000000002 H513.8000000000001 Z" fill="#e8308c" opacity="1"/><text x="569.0" y="103.1" font-size="7.5" fill="#424242" text-anchor="end" font-weight="normal" textLength="9.38" lengthAdjust="spacingAndGlyphs"  stroke="#424242" stroke-width="0.16">AC</text><text x="569.0" y="113.69999999999999" font-size="7.5" fill="#424242" text-anchor="end" font-weight="normal" textLength="9.75" lengthAdjust="spacingAndGlyphs"  stroke="#424242" stroke-width="0.16">DC</text><text x="569.0" y="124.3" font-size="7.5" fill="#424242" text-anchor="end" font-weight="normal" textLength="15.00" lengthAdjust="spacingAndGlyphs"  stroke="#424242" stroke-width="0.16">GND</text><text x="569.0" y="134.89999999999998" font-size="7.5" fill="#424242" text-anchor="end" font-weight="normal" textLength="13.50" lengthAdjust="spacingAndGlyphs"  stroke="#424242" stroke-width="0.16">OFF</text><rect x="571.3" y="93.3" width="9.8" height="46.4" fill="#c8c8c8" stroke="#5a5a5a" stroke-width="0.8"/><line x1="572.3" y1="139.1" x2="580.6999999999999" y2="139.1" stroke="#7a7a7a" stroke-width="0.8" /><rect x="572.3" y="94.3" width="7.8" height="10.5" fill="#d8d8d8" stroke="#808080" stroke-width="0.5"/><line x1="573.3" y1="96.3" x2="579.0999999999999" y2="96.3" stroke="#707070" stroke-width="0.6" /><line x1="573.3" y1="98.5" x2="579.0999999999999" y2="98.5" stroke="#707070" stroke-width="0.6" /><line x1="573.3" y1="100.7" x2="579.0999999999999" y2="100.7" stroke="#707070" stroke-width="0.6" /><line x1="573.3" y1="102.89999999999999" x2="579.0999999999999" y2="102.89999999999999" stroke="#707070" stroke-width="0.6" /><rect x="575.5" y="106.3" width="1.6" height="30.4" fill="#202020" /><text x="569.0" y="149.2" font-size="7.5" fill="#424242" text-anchor="end" font-weight="normal" textLength="16.88" lengthAdjust="spacingAndGlyphs"  stroke="#424242" stroke-width="0.16">Invert</text><rect x="570.9" y="142.3" width="9.6" height="9.5" fill="url(#gBtn)" stroke="#404040" stroke-width="0.5"/><text x="569.0" y="161.3" font-size="7.5" fill="#424242" text-anchor="end" font-weight="normal" textLength="13.69" lengthAdjust="spacingAndGlyphs"  stroke="#424242" stroke-width="0.16">C+D</text><rect x="570.9" y="153.7" width="9.6" height="10.2" fill="url(#gBtn)" stroke="#404040" stroke-width="0.5"/><path d="M515.7 228.2 V194.9 A33.2 33.2 0 0 1 582.1 194.9 V228.2 Z" fill="#ffffff" stroke="#6a6a6a" stroke-width="0.8"/><path d="M559.9 173.9 L564.1999999999999 165.4 L568.1999999999999 167.70000000000002 L563.6 175.9" fill="#b0b0b0" stroke="#7a7a7a" stroke-width="0.6"/><rect x="534.6" y="212.4" width="27.6" height="15.799999999999983" fill="#b4b4b4" stroke="#7a7a7a" stroke-width="0.6"/><path d="M537.15 214.39 L535.75 216.81 M532.49 210.81 L530.51 212.79 M528.91 206.15 L526.49 207.55 M526.67 200.72 L523.96 201.45 M525.90 194.90 L523.10 194.90 M526.67 189.08 L523.96 188.35 M528.91 183.65 L526.49 182.25 M532.49 178.99 L530.51 177.01 M537.15 175.41 L535.75 172.99 M542.58 173.17 L541.85 170.46 M548.40 172.40 L548.40 169.60 M554.22 173.17 L554.95 170.46 M559.65 175.41 L561.05 172.99 M564.31 178.99 L566.29 177.01 M567.89 183.65 L570.31 182.25 M570.13 189.08 L572.84 188.35 M570.90 194.90 L573.70 194.90 M570.13 200.72 L572.84 201.45 M567.89 206.15 L570.31 207.55 M564.31 210.81 L566.29 212.79 M559.65 214.39 L561.05 216.81" stroke="#303030" stroke-width="0.7"/><text x="527.9" y="177.0" font-size="5.4" fill="#4a4a4a" text-anchor="middle" font-weight="normal" >1</text><text x="521.6999999999999" y="187.10000000000002" font-size="5.4" fill="#4a4a4a" text-anchor="middle" font-weight="normal" >2</text><text x="519.3" y="197.20000000000002" font-size="5.4" fill="#4a4a4a" text-anchor="middle" font-weight="normal" >5</text><text x="521.0" y="208.3" font-size="5.4" fill="#4a4a4a" text-anchor="middle" font-weight="normal" >10</text><text x="526.8" y="217.60000000000002" font-size="5.4" fill="#4a4a4a" text-anchor="middle" font-weight="normal" >20</text><text x="537.8" y="170.3" font-size="5.4" fill="#4a4a4a" text-anchor="middle" font-weight="normal" >0.5</text><text x="548.6" y="168.3" font-size="5.4" fill="#4a4a4a" text-anchor="middle" font-weight="normal" >0.2</text><text x="558.0" y="170.3" font-size="5.4" fill="#4a4a4a" text-anchor="middle" font-weight="normal" >0.1</text><text x="570.0" y="177.0" font-size="5.4" fill="#4a4a4a" text-anchor="middle" font-weight="normal" >50</text><text x="576.8" y="187.10000000000002" font-size="5.4" fill="#4a4a4a" text-anchor="middle" font-weight="normal" >20</text><text x="577.4" y="197.20000000000002" font-size="5.4" fill="#4a4a4a" text-anchor="middle" font-weight="normal" >10</text><text x="575.4" y="208.3" font-size="5.4" fill="#4a4a4a" text-anchor="middle" font-weight="normal" >5</text><text x="568.6999999999999" y="217.3" font-size="5.4" fill="#4a4a4a" text-anchor="middle" font-weight="normal" >2</text><text x="523.8000000000001" y="225.5" font-size="7.6" fill="#404040" text-anchor="middle" font-weight="normal" >V</text><text x="572.9" y="225.5" font-size="7.6" fill="#404040" text-anchor="middle" font-weight="normal" >mV</text><circle cx="548.4" cy="194.9" r="22" fill="url(#gKnob)"/><circle cx="548.4" cy="194.9" r="22" fill="url(#gKnobEdge)"/><circle cx="549.3" cy="195.8" r="11.6" fill="#202020" opacity="0.55"/><circle cx="548.4" cy="194.9" r="11" fill="url(#gCap)"/><path d="M527.9 194.9 L535.4 190.70000000000002 L535.4 199.1 Z" fill="#e8308c"/><path d="M557.9 202.4 L551.9 201.20000000000002 L554.4 197.9 Z" fill="#e8308c"/><rect x="535.1999999999999" y="218.9" width="26.8" height="8.8" fill="#ffffff" stroke="#6a6a6a" stroke-width="0.8"/><text x="536.4" y="226.1" font-size="7.2" fill="#2020a0" text-anchor="start" font-weight="normal" >5</text><rect x="442.5" y="230.6" width="70.79999999999995" height="157.9" fill="#b4b4b4" /><line x1="442.5" y1="250.1" x2="513.3" y2="250.1" stroke="#5a5a5a" stroke-width="1" /><line x1="442.5" y1="251.1" x2="513.3" y2="251.1" stroke="#d4d4d4" stroke-width="1" /><line x1="443.0" y1="230.6" x2="443.0" y2="388.5" stroke="#d4d4d4" stroke-width="1" /><line x1="512.8" y1="230.6" x2="512.8" y2="388.5" stroke="#5a5a5a" stroke-width="1" /><text x="476.4" y="244.79999999999998" font-size="9.9" fill="#2a9ae0" text-anchor="middle" font-weight="bold" textLength="42.30" lengthAdjust="spacingAndGlyphs" >Channel B</text><text x="465.1" y="258.0" font-size="7.5" fill="#424242" text-anchor="middle" font-weight="normal" textLength="24.01" lengthAdjust="spacingAndGlyphs"  stroke="#424242" stroke-width="0.16">Position</text><rect x="451.2" y="260.5" width="29.5" height="59.8" fill="#c4c4c4" stroke="#484848" stroke-width="0.9"/><rect x="456.2" y="262.4" width="19.1" height="56" fill="url(#gDrumV)"/><rect x="456.2" y="262.4" width="19.1" height="56" fill="url(#gEdgeV)"/><line x1="456.2" y1="262.4" x2="456.2" y2="318.4" stroke="#404040" stroke-width="0.9" /><line x1="475.3" y1="262.4" x2="475.3" y2="318.4" stroke="#404040" stroke-width="0.9" /><path d="M456.7 264.5 h2.2 M474.8 264.5 h-2.2 M456.7 266.9 h1.2 M474.8 266.9 h-1.2 M456.7 269.2 h1.2 M474.8 269.2 h-1.2 M456.7 271.6 h1.2 M474.8 271.6 h-1.2 M456.7 273.9 h1.2 M474.8 273.9 h-1.2 M456.7 276.2 h2.2 M474.8 276.2 h-2.2 M456.7 278.6 h1.2 M474.8 278.6 h-1.2 M456.7 280.9 h1.2 M474.8 280.9 h-1.2 M456.7 283.3 h1.2 M474.8 283.3 h-1.2 M456.7 285.6 h1.2 M474.8 285.6 h-1.2 M456.7 288.0 h2.2 M474.8 288.0 h-2.2 M456.7 290.4 h1.2 M474.8 290.4 h-1.2 M456.7 292.7 h1.2 M474.8 292.7 h-1.2 M456.7 295.1 h1.2 M474.8 295.1 h-1.2 M456.7 297.4 h1.2 M474.8 297.4 h-1.2 M456.7 299.8 h2.2 M474.8 299.8 h-2.2 M456.7 302.1 h1.2 M474.8 302.1 h-1.2 M456.7 304.4 h1.2 M474.8 304.4 h-1.2 M456.7 306.8 h1.2 M474.8 306.8 h-1.2 M456.7 309.1 h1.2 M474.8 309.1 h-1.2 M456.7 311.5 h2.2 M474.8 311.5 h-2.2 M456.7 313.9 h1.2 M474.8 313.9 h-1.2 M456.7 316.2 h1.2 M474.8 316.2 h-1.2" stroke="#202020" stroke-width="0.5" opacity="0.8"/><text x="466.0" y="276.8" font-size="7.0" fill="#181818" text-anchor="middle" font-weight="normal" letter-spacing="-0.1">30</text><text x="466.0" y="291.65000000000003" font-size="7.0" fill="#181818" text-anchor="middle" font-weight="normal" letter-spacing="-0.1">40</text><text x="466.0" y="306.5" font-size="7.0" fill="#181818" text-anchor="middle" font-weight="normal" letter-spacing="-0.1">50</text><path d="M452.2 286.5 L456.2 289.4 L452.2 292.29999999999995 Z M479.5 286.5 L475.3 289.4 L479.5 292.29999999999995 Z" fill="#e00000"/><path d="M446.2 281.09999999999997 L449.09999999999997 285.79999999999995 H446.8 V293.0 H449.09999999999997 L446.2 297.7 L443.3 293.0 H445.59999999999997 V285.79999999999995 H443.3 Z" fill="#2a9ae0" opacity="1"/><text x="498.5" y="262.7" font-size="7.5" fill="#424242" text-anchor="end" font-weight="normal" textLength="9.38" lengthAdjust="spacingAndGlyphs"  stroke="#424242" stroke-width="0.16">AC</text><text x="498.5" y="273.3" font-size="7.5" fill="#424242" text-anchor="end" font-weight="normal" textLength="9.75" lengthAdjust="spacingAndGlyphs"  stroke="#424242" stroke-width="0.16">DC</text><text x="498.5" y="283.9" font-size="7.5" fill="#424242" text-anchor="end" font-weight="normal" textLength="15.00" lengthAdjust="spacingAndGlyphs"  stroke="#424242" stroke-width="0.16">GND</text><text x="498.5" y="294.5" font-size="7.5" fill="#424242" text-anchor="end" font-weight="normal" textLength="13.50" lengthAdjust="spacingAndGlyphs"  stroke="#424242" stroke-width="0.16">OFF</text><rect x="500.8" y="252.89999999999998" width="9.8" height="46.4" fill="#c8c8c8" stroke="#5a5a5a" stroke-width="0.8"/><line x1="501.8" y1="298.69999999999993" x2="510.2" y2="298.69999999999993" stroke="#7a7a7a" stroke-width="0.8" /><rect x="501.8" y="253.89999999999998" width="7.8" height="10.5" fill="#d8d8d8" stroke="#808080" stroke-width="0.5"/><line x1="502.8" y1="255.89999999999998" x2="508.6" y2="255.89999999999998" stroke="#707070" stroke-width="0.6" /><line x1="502.8" y1="258.09999999999997" x2="508.6" y2="258.09999999999997" stroke="#707070" stroke-width="0.6" /><line x1="502.8" y1="260.29999999999995" x2="508.6" y2="260.29999999999995" stroke="#707070" stroke-width="0.6" /><line x1="502.8" y1="262.5" x2="508.6" y2="262.5" stroke="#707070" stroke-width="0.6" /><rect x="505.0" y="265.9" width="1.6" height="30.4" fill="#202020" /><text x="498.5" y="308.79999999999995" font-size="7.5" fill="#424242" text-anchor="end" font-weight="normal" textLength="16.88" lengthAdjust="spacingAndGlyphs"  stroke="#424242" stroke-width="0.16">Invert</text><rect x="500.4" y="301.9" width="9.6" height="9.5" fill="url(#gBtn)" stroke="#404040" stroke-width="0.5"/><path d="M445.2 388.40000000000003 V355.1 A33.2 33.2 0 0 1 511.6 355.1 V388.40000000000003 Z" fill="#ffffff" stroke="#6a6a6a" stroke-width="0.8"/><path d="M489.4 334.1 L493.7 325.6 L497.7 327.90000000000003 L493.09999999999997 336.1" fill="#b0b0b0" stroke="#7a7a7a" stroke-width="0.6"/><rect x="464.09999999999997" y="372.6" width="27.6" height="15.800000000000011" fill="#b4b4b4" stroke="#7a7a7a" stroke-width="0.6"/><path d="M466.65 374.59 L465.25 377.01 M461.99 371.01 L460.01 372.99 M458.41 366.35 L455.99 367.75 M456.17 360.92 L453.46 361.65 M455.40 355.10 L452.60 355.10 M456.17 349.28 L453.46 348.55 M458.41 343.85 L455.99 342.45 M461.99 339.19 L460.01 337.21 M466.65 335.61 L465.25 333.19 M472.08 333.37 L471.35 330.66 M477.90 332.60 L477.90 329.80 M483.72 333.37 L484.45 330.66 M489.15 335.61 L490.55 333.19 M493.81 339.19 L495.79 337.21 M497.39 343.85 L499.81 342.45 M499.63 349.28 L502.34 348.55 M500.40 355.10 L503.20 355.10 M499.63 360.92 L502.34 361.65 M497.39 366.35 L499.81 367.75 M493.81 371.01 L495.79 372.99 M489.15 374.59 L490.55 377.01" stroke="#303030" stroke-width="0.7"/><text x="457.4" y="337.2" font-size="5.4" fill="#4a4a4a" text-anchor="middle" font-weight="normal" >1</text><text x="451.2" y="347.3" font-size="5.4" fill="#4a4a4a" text-anchor="middle" font-weight="normal" >2</text><text x="448.79999999999995" y="357.4" font-size="5.4" fill="#4a4a4a" text-anchor="middle" font-weight="normal" >5</text><text x="450.5" y="368.5" font-size="5.4" fill="#4a4a4a" text-anchor="middle" font-weight="normal" >10</text><text x="456.29999999999995" y="377.8" font-size="5.4" fill="#4a4a4a" text-anchor="middle" font-weight="normal" >20</text><text x="467.29999999999995" y="330.5" font-size="5.4" fill="#4a4a4a" text-anchor="middle" font-weight="normal" >0.5</text><text x="478.09999999999997" y="328.5" font-size="5.4" fill="#4a4a4a" text-anchor="middle" font-weight="normal" >0.2</text><text x="487.5" y="330.5" font-size="5.4" fill="#4a4a4a" text-anchor="middle" font-weight="normal" >0.1</text><text x="499.5" y="337.2" font-size="5.4" fill="#4a4a4a" text-anchor="middle" font-weight="normal" >50</text><text x="506.29999999999995" y="347.3" font-size="5.4" fill="#4a4a4a" text-anchor="middle" font-weight="normal" >20</text><text x="506.9" y="357.4" font-size="5.4" fill="#4a4a4a" text-anchor="middle" font-weight="normal" >10</text><text x="504.9" y="368.5" font-size="5.4" fill="#4a4a4a" text-anchor="middle" font-weight="normal" >5</text><text x="498.2" y="377.5" font-size="5.4" fill="#4a4a4a" text-anchor="middle" font-weight="normal" >2</text><text x="453.3" y="385.70000000000005" font-size="7.6" fill="#404040" text-anchor="middle" font-weight="normal" >V</text><text x="502.40000000000003" y="385.70000000000005" font-size="7.6" fill="#404040" text-anchor="middle" font-weight="normal" >mV</text><circle cx="477.9" cy="355.1" r="22" fill="url(#gKnob)"/><circle cx="477.9" cy="355.1" r="22" fill="url(#gKnobEdge)"/><circle cx="478.79999999999995" cy="356.0" r="11.6" fill="#202020" opacity="0.55"/><circle cx="477.9" cy="355.1" r="11" fill="url(#gCap)"/><path d="M457.4 355.1 L464.9 350.90000000000003 L464.9 359.3 Z" fill="#2a9ae0"/><path d="M487.4 362.6 L481.4 361.40000000000003 L483.9 358.1 Z" fill="#2a9ae0"/><rect x="464.7" y="379.1" width="26.8" height="8.8" fill="#ffffff" stroke="#6a6a6a" stroke-width="0.8"/><text x="465.9" y="386.3" font-size="7.2" fill="#2020a0" text-anchor="start" font-weight="normal" >5</text><rect x="513.0" y="230.6" width="70.79999999999995" height="157.9" fill="#b4b4b4" /><line x1="513.0" y1="250.1" x2="583.8" y2="250.1" stroke="#5a5a5a" stroke-width="1" /><line x1="513.0" y1="251.1" x2="583.8" y2="251.1" stroke="#d4d4d4" stroke-width="1" /><line x1="513.5" y1="230.6" x2="513.5" y2="388.5" stroke="#d4d4d4" stroke-width="1" /><line x1="583.3" y1="230.6" x2="583.3" y2="388.5" stroke="#5a5a5a" stroke-width="1" /><text x="546.9" y="244.79999999999998" font-size="9.9" fill="#20a060" text-anchor="middle" font-weight="bold" textLength="42.30" lengthAdjust="spacingAndGlyphs" >Channel D</text><text x="535.6" y="258.0" font-size="7.5" fill="#424242" text-anchor="middle" font-weight="normal" textLength="24.01" lengthAdjust="spacingAndGlyphs"  stroke="#424242" stroke-width="0.16">Position</text><rect x="521.7" y="260.5" width="29.5" height="59.8" fill="#c4c4c4" stroke="#484848" stroke-width="0.9"/><rect x="526.7" y="262.4" width="19.1" height="56" fill="url(#gDrumV)"/><rect x="526.7" y="262.4" width="19.1" height="56" fill="url(#gEdgeV)"/><line x1="526.7" y1="262.4" x2="526.7" y2="318.4" stroke="#404040" stroke-width="0.9" /><line x1="545.8000000000001" y1="262.4" x2="545.8000000000001" y2="318.4" stroke="#404040" stroke-width="0.9" /><path d="M527.2 264.5 h2.2 M545.3000000000001 264.5 h-2.2 M527.2 266.9 h1.2 M545.3000000000001 266.9 h-1.2 M527.2 269.2 h1.2 M545.3000000000001 269.2 h-1.2 M527.2 271.6 h1.2 M545.3000000000001 271.6 h-1.2 M527.2 273.9 h1.2 M545.3000000000001 273.9 h-1.2 M527.2 276.2 h2.2 M545.3000000000001 276.2 h-2.2 M527.2 278.6 h1.2 M545.3000000000001 278.6 h-1.2 M527.2 280.9 h1.2 M545.3000000000001 280.9 h-1.2 M527.2 283.3 h1.2 M545.3000000000001 283.3 h-1.2 M527.2 285.6 h1.2 M545.3000000000001 285.6 h-1.2 M527.2 288.0 h2.2 M545.3000000000001 288.0 h-2.2 M527.2 290.4 h1.2 M545.3000000000001 290.4 h-1.2 M527.2 292.7 h1.2 M545.3000000000001 292.7 h-1.2 M527.2 295.1 h1.2 M545.3000000000001 295.1 h-1.2 M527.2 297.4 h1.2 M545.3000000000001 297.4 h-1.2 M527.2 299.8 h2.2 M545.3000000000001 299.8 h-2.2 M527.2 302.1 h1.2 M545.3000000000001 302.1 h-1.2 M527.2 304.4 h1.2 M545.3000000000001 304.4 h-1.2 M527.2 306.8 h1.2 M545.3000000000001 306.8 h-1.2 M527.2 309.1 h1.2 M545.3000000000001 309.1 h-1.2 M527.2 311.5 h2.2 M545.3000000000001 311.5 h-2.2 M527.2 313.9 h1.2 M545.3000000000001 313.9 h-1.2 M527.2 316.2 h1.2 M545.3000000000001 316.2 h-1.2" stroke="#202020" stroke-width="0.5" opacity="0.8"/><text x="536.5" y="276.8" font-size="7.0" fill="#181818" text-anchor="middle" font-weight="normal" letter-spacing="-0.1">-130</text><text x="536.5" y="291.65000000000003" font-size="7.0" fill="#181818" text-anchor="middle" font-weight="normal" letter-spacing="-0.1">-120</text><text x="536.5" y="306.5" font-size="7.0" fill="#181818" text-anchor="middle" font-weight="normal" letter-spacing="-0.1">-110</text><path d="M522.7 286.5 L526.7 289.4 L522.7 292.29999999999995 Z M550.0 286.5 L545.8000000000001 289.4 L550.0 292.29999999999995 Z" fill="#e00000"/><path d="M516.7 281.09999999999997 L519.6 285.79999999999995 H517.3000000000001 V293.0 H519.6 L516.7 297.7 L513.8000000000001 293.0 H516.1 V285.79999999999995 H513.8000000000001 Z" fill="#20a060" opacity="1"/><text x="569.0" y="262.7" font-size="7.5" fill="#424242" text-anchor="end" font-weight="normal" textLength="9.38" lengthAdjust="spacingAndGlyphs"  stroke="#424242" stroke-width="0.16">AC</text><text x="569.0" y="273.3" font-size="7.5" fill="#424242" text-anchor="end" font-weight="normal" textLength="9.75" lengthAdjust="spacingAndGlyphs"  stroke="#424242" stroke-width="0.16">DC</text><text x="569.0" y="283.9" font-size="7.5" fill="#424242" text-anchor="end" font-weight="normal" textLength="15.00" lengthAdjust="spacingAndGlyphs"  stroke="#424242" stroke-width="0.16">GND</text><text x="569.0" y="294.5" font-size="7.5" fill="#424242" text-anchor="end" font-weight="normal" textLength="13.50" lengthAdjust="spacingAndGlyphs"  stroke="#424242" stroke-width="0.16">OFF</text><rect x="571.3" y="252.89999999999998" width="9.8" height="46.4" fill="#c8c8c8" stroke="#5a5a5a" stroke-width="0.8"/><line x1="572.3" y1="298.69999999999993" x2="580.6999999999999" y2="298.69999999999993" stroke="#7a7a7a" stroke-width="0.8" /><rect x="572.3" y="253.89999999999998" width="7.8" height="10.5" fill="#d8d8d8" stroke="#808080" stroke-width="0.5"/><line x1="573.3" y1="255.89999999999998" x2="579.0999999999999" y2="255.89999999999998" stroke="#707070" stroke-width="0.6" /><line x1="573.3" y1="258.09999999999997" x2="579.0999999999999" y2="258.09999999999997" stroke="#707070" stroke-width="0.6" /><line x1="573.3" y1="260.29999999999995" x2="579.0999999999999" y2="260.29999999999995" stroke="#707070" stroke-width="0.6" /><line x1="573.3" y1="262.5" x2="579.0999999999999" y2="262.5" stroke="#707070" stroke-width="0.6" /><rect x="575.5" y="265.9" width="1.6" height="30.4" fill="#202020" /><text x="569.0" y="308.79999999999995" font-size="7.5" fill="#424242" text-anchor="end" font-weight="normal" textLength="16.88" lengthAdjust="spacingAndGlyphs"  stroke="#424242" stroke-width="0.16">Invert</text><rect x="570.9" y="301.9" width="9.6" height="9.5" fill="url(#gBtn)" stroke="#404040" stroke-width="0.5"/><path d="M515.7 388.40000000000003 V355.1 A33.2 33.2 0 0 1 582.1 355.1 V388.40000000000003 Z" fill="#ffffff" stroke="#6a6a6a" stroke-width="0.8"/><path d="M559.9 334.1 L564.1999999999999 325.6 L568.1999999999999 327.90000000000003 L563.6 336.1" fill="#b0b0b0" stroke="#7a7a7a" stroke-width="0.6"/><rect x="534.6" y="372.6" width="27.6" height="15.800000000000011" fill="#b4b4b4" stroke="#7a7a7a" stroke-width="0.6"/><path d="M537.15 374.59 L535.75 377.01 M532.49 371.01 L530.51 372.99 M528.91 366.35 L526.49 367.75 M526.67 360.92 L523.96 361.65 M525.90 355.10 L523.10 355.10 M526.67 349.28 L523.96 348.55 M528.91 343.85 L526.49 342.45 M532.49 339.19 L530.51 337.21 M537.15 335.61 L535.75 333.19 M542.58 333.37 L541.85 330.66 M548.40 332.60 L548.40 329.80 M554.22 333.37 L554.95 330.66 M559.65 335.61 L561.05 333.19 M564.31 339.19 L566.29 337.21 M567.89 343.85 L570.31 342.45 M570.13 349.28 L572.84 348.55 M570.90 355.10 L573.70 355.10 M570.13 360.92 L572.84 361.65 M567.89 366.35 L570.31 367.75 M564.31 371.01 L566.29 372.99 M559.65 374.59 L561.05 377.01" stroke="#303030" stroke-width="0.7"/><text x="527.9" y="337.2" font-size="5.4" fill="#4a4a4a" text-anchor="middle" font-weight="normal" >1</text><text x="521.6999999999999" y="347.3" font-size="5.4" fill="#4a4a4a" text-anchor="middle" font-weight="normal" >2</text><text x="519.3" y="357.4" font-size="5.4" fill="#4a4a4a" text-anchor="middle" font-weight="normal" >5</text><text x="521.0" y="368.5" font-size="5.4" fill="#4a4a4a" text-anchor="middle" font-weight="normal" >10</text><text x="526.8" y="377.8" font-size="5.4" fill="#4a4a4a" text-anchor="middle" font-weight="normal" >20</text><text x="537.8" y="330.5" font-size="5.4" fill="#4a4a4a" text-anchor="middle" font-weight="normal" >0.5</text><text x="548.6" y="328.5" font-size="5.4" fill="#4a4a4a" text-anchor="middle" font-weight="normal" >0.2</text><text x="558.0" y="330.5" font-size="5.4" fill="#4a4a4a" text-anchor="middle" font-weight="normal" >0.1</text><text x="570.0" y="337.2" font-size="5.4" fill="#4a4a4a" text-anchor="middle" font-weight="normal" >50</text><text x="576.8" y="347.3" font-size="5.4" fill="#4a4a4a" text-anchor="middle" font-weight="normal" >20</text><text x="577.4" y="357.4" font-size="5.4" fill="#4a4a4a" text-anchor="middle" font-weight="normal" >10</text><text x="575.4" y="368.5" font-size="5.4" fill="#4a4a4a" text-anchor="middle" font-weight="normal" >5</text><text x="568.6999999999999" y="377.5" font-size="5.4" fill="#4a4a4a" text-anchor="middle" font-weight="normal" >2</text><text x="523.8000000000001" y="385.70000000000005" font-size="7.6" fill="#404040" text-anchor="middle" font-weight="normal" >V</text><text x="572.9" y="385.70000000000005" font-size="7.6" fill="#404040" text-anchor="middle" font-weight="normal" >mV</text><circle cx="548.4" cy="355.1" r="22" fill="url(#gKnob)"/><circle cx="548.4" cy="355.1" r="22" fill="url(#gKnobEdge)"/><circle cx="549.3" cy="356.0" r="11.6" fill="#202020" opacity="0.55"/><circle cx="548.4" cy="355.1" r="11" fill="url(#gCap)"/><path d="M527.9 355.1 L535.4 350.90000000000003 L535.4 359.3 Z" fill="#20a060"/><path d="M557.9 362.6 L551.9 361.40000000000003 L554.4 358.1 Z" fill="#20a060"/><rect x="535.1999999999999" y="379.1" width="26.8" height="8.8" fill="#ffffff" stroke="#6a6a6a" stroke-width="0.8"/><text x="536.4" y="386.3" font-size="7.2" fill="#2020a0" text-anchor="start" font-weight="normal" >5</text><rect x="582.3" y="70.9" width="3" height="321.1" fill="#0846d8" /><rect x="63" y="389.2" width="522.3" height="2.8" fill="#0846d8" /><rect x="372" y="230.6" width="69.80000000000001" height="157.9" fill="#b4b4b4" /><line x1="372" y1="250.5" x2="441.8" y2="250.5" stroke="#5a5a5a" stroke-width="1" /><line x1="372" y1="251.5" x2="441.8" y2="251.5" stroke="#d4d4d4" stroke-width="1" /><line x1="372.5" y1="230.6" x2="372.5" y2="388.5" stroke="#d4d4d4" stroke-width="1" /><line x1="441.3" y1="230.6" x2="441.3" y2="388.5" stroke="#5a5a5a" stroke-width="1" /><text x="404.4" y="244.79999999999998" font-size="9.9" fill="#f08a30" text-anchor="middle" font-weight="bold" textLength="41.82" lengthAdjust="spacingAndGlyphs" >Horizontal</text><text x="405.9" y="260.5" font-size="7.5" fill="#424242" text-anchor="middle" font-weight="normal" textLength="21.39" lengthAdjust="spacingAndGlyphs"  stroke="#424242" stroke-width="0.16">Source</text><path d="M381 267.5 L385 265 L389 262.5" fill="none" stroke="#e08040" stroke-width="1"/><text x="395.7" y="267.1" font-size="6.4" fill="#e8e820" text-anchor="middle" font-weight="bold" >A</text><text x="406.6" y="267.1" font-size="6.4" fill="#30a0e0" text-anchor="middle" font-weight="bold" >B</text><text x="417.7" y="267.1" font-size="6.4" fill="#e03090" text-anchor="middle" font-weight="bold" >C</text><text x="428.5" y="267.1" font-size="6.4" fill="#20a060" text-anchor="middle" font-weight="bold" >D</text><rect x="377.6" y="269.6" width="59" height="10.7" fill="#c8c8c8" stroke="#484848" stroke-width="0.8"/><line x1="390" y1="274.8" x2="431" y2="274.8" stroke="#202020" stroke-width="1.6" /><rect x="378.5" y="270.5" width="11.5" height="9" fill="#dcdcdc" stroke="#606060" stroke-width="0.5"/><line x1="380.5" y1="272" x2="380.5" y2="278.5" stroke="#606060" stroke-width="0.6" /><line x1="382.7" y1="272" x2="382.7" y2="278.5" stroke="#606060" stroke-width="0.6" /><line x1="384.9" y1="272" x2="384.9" y2="278.5" stroke="#606060" stroke-width="0.6" /><line x1="387.1" y1="272" x2="387.1" y2="278.5" stroke="#606060" stroke-width="0.6" /><text x="405.9" y="289" font-size="7.5" fill="#424242" text-anchor="middle" font-weight="normal" textLength="24.01" lengthAdjust="spacingAndGlyphs"  stroke="#424242" stroke-width="0.16">Position</text><rect x="376.8" y="291.2" width="60.9" height="29.4" fill="#c4c4c4" stroke="#484848" stroke-width="0.9"/><rect x="378.5" y="296.4" width="56.8" height="18.3" fill="url(#gDrumH)"/><line x1="378.5" y1="296.4" x2="435.3" y2="296.4" stroke="#404040" stroke-width="0.9" /><line x1="378.5" y1="314.7" x2="435.3" y2="314.7" stroke="#404040" stroke-width="0.9" /><path d="M381.0 297 v2 M381.0 314.2 v-2 M383.4 297 v1.1 M383.4 314.2 v-1.1 M385.7 297 v1.1 M385.7 314.2 v-1.1 M388.1 297 v1.1 M388.1 314.2 v-1.1 M390.4 297 v1.1 M390.4 314.2 v-1.1 M392.8 297 v2 M392.8 314.2 v-2 M395.1 297 v1.1 M395.1 314.2 v-1.1 M397.4 297 v1.1 M397.4 314.2 v-1.1 M399.8 297 v1.1 M399.8 314.2 v-1.1 M402.1 297 v1.1 M402.1 314.2 v-1.1 M404.5 297 v2 M404.5 314.2 v-2 M406.9 297 v1.1 M406.9 314.2 v-1.1 M409.2 297 v1.1 M409.2 314.2 v-1.1 M411.6 297 v1.1 M411.6 314.2 v-1.1 M413.9 297 v1.1 M413.9 314.2 v-1.1 M416.2 297 v2 M416.2 314.2 v-2 M418.6 297 v1.1 M418.6 314.2 v-1.1 M420.9 297 v1.1 M420.9 314.2 v-1.1 M423.3 297 v1.1 M423.3 314.2 v-1.1 M425.6 297 v1.1 M425.6 314.2 v-1.1 M428.0 297 v2 M428.0 314.2 v-2 M430.4 297 v1.1 M430.4 314.2 v-1.1 M432.7 297 v1.1 M432.7 314.2 v-1.1 M435.1 297 v1.1 M435.1 314.2 v-1.1" stroke="#202020" stroke-width="0.5" opacity="0.8"/><text x="390.6" y="308.1" font-size="7.2" fill="#181818" text-anchor="middle" font-weight="normal" letter-spacing="-0.1">210</text><text x="405.9" y="308.1" font-size="7.2" fill="#181818" text-anchor="middle" font-weight="normal" letter-spacing="-0.1">200</text><text x="421.2" y="308.1" font-size="7.2" fill="#181818" text-anchor="middle" font-weight="normal" letter-spacing="-0.1">190</text><path d="M402.5 291.5 H409.3 L405.9 295.5 Z M402.5 319.3 H409.3 L405.9 315.3 Z" fill="#e00000"/><path d="M373.8 387.8 V354.5 A33.3 33.3 0 0 1 440.4 354.5 V387.8 Z" fill="#fff" stroke="#6a6a6a" stroke-width="0.8"/><path d="M417.6 335 L421 325.7 L423.6 326.8 L420.2 336" fill="#b4b4b4" stroke="#8a8a8a" stroke-width="0.5"/><rect x="392.8" y="372.5" width="28.2" height="16" fill="#b4b4b4" stroke="#7a7a7a" stroke-width="0.6"/><path d="M395.65 373.99 L394.25 376.41 M391.84 371.22 L389.97 373.30 M388.70 367.73 L386.43 369.37 M386.35 363.65 L383.79 364.79 M384.89 359.18 L382.15 359.76 M384.40 354.50 L381.60 354.50 M384.89 349.82 L382.15 349.24 M386.35 345.35 L383.79 344.21 M388.70 341.27 L386.43 339.63 M391.84 337.78 L389.97 335.70 M395.65 335.01 L394.25 332.59 M399.95 333.10 L399.08 330.44 M404.55 332.12 L404.26 329.34 M409.25 332.12 L409.54 329.34 M413.85 333.10 L414.72 330.44 M418.15 335.01 L419.55 332.59 M421.96 337.78 L423.83 335.70 M425.10 341.27 L427.37 339.63 M427.45 345.35 L430.01 344.21 M428.91 349.82 L431.65 349.24 M429.40 354.50 L432.20 354.50 M428.91 359.18 L431.65 359.76 M427.45 363.65 L430.01 364.79 M425.10 367.73 L427.37 369.37 M421.96 371.22 L423.83 373.30 M418.15 373.99 L419.55 376.41" stroke="#303030" stroke-width="0.7"/><text x="395.5" y="329.59999999999997" font-size="5.4" fill="#4a4a4a" text-anchor="middle" font-weight="normal" >1</text><text x="388.1" y="333.7" font-size="5.4" fill="#4a4a4a" text-anchor="middle" font-weight="normal" >2</text><text x="382.3" y="339.9" font-size="5.4" fill="#4a4a4a" text-anchor="middle" font-weight="normal" >5</text><text x="378.7" y="347.79999999999995" font-size="5.4" fill="#4a4a4a" text-anchor="middle" font-weight="normal" >10</text><text x="378.7" y="355.79999999999995" font-size="5.4" fill="#4a4a4a" text-anchor="middle" font-weight="normal" >20</text><text x="378" y="363.9" font-size="5.4" fill="#4a4a4a" text-anchor="middle" font-weight="normal" >50</text><text x="379.4" y="371.59999999999997" font-size="5.4" fill="#4a4a4a" text-anchor="middle" font-weight="normal" >100</text><text x="385.8" y="378.59999999999997" font-size="5.4" fill="#4a4a4a" text-anchor="middle" font-weight="normal" >200</text><text x="402.2" y="326.9" font-size="5.4" fill="#4a4a4a" text-anchor="middle" font-weight="normal" >0.5</text><text x="410.3" y="326.9" font-size="5.4" fill="#4a4a4a" text-anchor="middle" font-weight="normal" >0.2</text><text x="417.6" y="330.29999999999995" font-size="5.4" fill="#4a4a4a" text-anchor="middle" font-weight="normal" >0.1</text><text x="427.7" y="335.7" font-size="5.4" fill="#4a4a4a" text-anchor="middle" font-weight="normal" >50</text><text x="431.7" y="340.4" font-size="5.4" fill="#4a4a4a" text-anchor="middle" font-weight="normal" >20</text><text x="434.4" y="348.0" font-size="5.4" fill="#4a4a4a" text-anchor="middle" font-weight="normal" >10</text><text x="435.7" y="355.79999999999995" font-size="5.4" fill="#4a4a4a" text-anchor="middle" font-weight="normal" >5</text><text x="435" y="363.9" font-size="5.4" fill="#4a4a4a" text-anchor="middle" font-weight="normal" >2</text><text x="433" y="371.9" font-size="5.4" fill="#4a4a4a" text-anchor="middle" font-weight="normal" >1</text><text x="427.7" y="378.59999999999997" font-size="5.4" fill="#4a4a4a" text-anchor="middle" font-weight="normal" >0.5</text><text x="381.4" y="385.5" font-size="7.6" fill="#404040" text-anchor="middle" font-weight="normal" >ms</text><text x="431.7" y="385.5" font-size="7.6" fill="#404040" text-anchor="middle" font-weight="normal" >µs</text><circle cx="406.9" cy="354.5" r="21.6" fill="url(#gKnob)"/><circle cx="406.9" cy="354.5" r="21.6" fill="url(#gKnobEdge)"/><circle cx="407.79999999999995" cy="356.1" r="11.8" fill="#202020" opacity="0.55"/><circle cx="406.9" cy="355.2" r="11.4" fill="url(#gCap)"/><path d="M390.1 343.2 L397.5 343 L392.8 349.2 Z M399.5 347.2 L404.2 347.2 L401.5 351.9 Z" fill="#e87818"/><rect x="393.9" y="377.8" width="26.4" height="9" fill="#fff" stroke="#6a6a6a" stroke-width="0.8"/><text x="395" y="385.2" font-size="7.2" fill="#2020a0" text-anchor="start" font-weight="normal" >10m</text><rect x="78.3" y="398.2" width="383.9" height="105.80000000000001" fill="#7d9ce4"/><rect x="78.3" y="398.2" width="383.9" height="15.5" fill="url(#gTitleIn)"/><text x="80.9" y="409.6" font-size="8.62" fill="#e4ecfc" text-anchor="start" font-weight="bold" >VSM Signal Generator</text><rect x="449.2" y="402.8" width="8.6" height="7.5" rx="1" fill="#d89a9a" stroke="#f4e8ec" stroke-width="0.7"/><path d="M451.3 404.5 L455.7 408.6 M455.7 404.5 L451.3 408.6" stroke="#fff" stroke-width="1.3"/><rect x="80.2" y="413.7" width="380" height="88.3" fill="#c6c6c6" /><path d="M95.60 423.7 H150.60 L159.90 433 V488 L152.00 496.6 H140.60 V483.7 L146.30 478 V439.4 L143.40 435.9 H102.00 L98.40 439.4 V478 L105.60 484 H112.00 V496.6 H95.60 L85.60 486.6 V432.3 Z" fill="#e8e8e8" stroke="#3a3a3a" stroke-width="1.2" stroke-linejoin="miter"/><text x="104.6" y="432.8" font-size="7.5" fill="#303030" text-anchor="middle" font-weight="normal" >5</text><text x="118.9" y="432.8" font-size="7.5" fill="#303030" text-anchor="middle" font-weight="normal" >6</text><text x="134.6" y="432.8" font-size="7.5" fill="#303030" text-anchor="middle" font-weight="normal" >7</text><text x="148.9" y="435.0" font-size="7.5" fill="#303030" text-anchor="middle" font-weight="normal" >8</text><text x="92.7" y="442.8" font-size="7.5" fill="#303030" text-anchor="middle" font-weight="normal" >4</text><text x="92.7" y="457.09999999999997" font-size="7.5" fill="#303030" text-anchor="middle" font-weight="normal" >3</text><text x="92.7" y="470.0" font-size="7.5" fill="#303030" text-anchor="middle" font-weight="normal" >2</text><text x="92.7" y="485.0" font-size="7.5" fill="#303030" text-anchor="middle" font-weight="normal" >1</text><text x="104.9" y="493.8" font-size="7.5" fill="#303030" text-anchor="middle" font-weight="normal" >0</text><text x="152.7" y="450.0" font-size="7.5" fill="#303030" text-anchor="middle" font-weight="normal" >9</text><text x="152.7" y="463.59999999999997" font-size="7.5" fill="#303030" text-anchor="middle" font-weight="normal" >10</text><text x="152.7" y="477.8" font-size="7.5" fill="#303030" text-anchor="middle" font-weight="normal" >11</text><text x="148.4" y="491.4" font-size="7.5" fill="#303030" text-anchor="middle" font-weight="normal" >12</text><text x="122.7" y="443.6" font-size="7.8" fill="#3a3a3a" text-anchor="middle" font-weight="normal" font-style="italic">Centre</text><circle cx="122.7" cy="460.1" r="13.6" fill="url(#gBlueKnob)"/><path d="M122.7 460.1 l 13.3 0" stroke="#202020" stroke-width="1.3"/><rect x="114.1" y="486.3" width="23.6" height="8.8" rx="3" fill="#000"/><text x="125.9" y="494.3" font-size="9.2" fill="#20e020" text-anchor="middle" font-weight="normal" letter-spacing="-0.5">99.0</text><path d="M253.30 423.7 H308.30 L317.60 433 V488 L309.70 496.6 H298.30 V483.7 L304.00 478 V439.4 L301.10 435.9 H259.70 L256.10 439.4 V478 L263.30 484 H269.70 V496.6 H253.30 L243.30 486.6 V432.3 Z" fill="#e8e8e8" stroke="#3a3a3a" stroke-width="1.2" stroke-linejoin="miter"/><text x="262.29999999999995" y="432.8" font-size="7.5" fill="#303030" text-anchor="middle" font-weight="normal" >5</text><text x="276.6" y="432.8" font-size="7.5" fill="#303030" text-anchor="middle" font-weight="normal" >6</text><text x="292.29999999999995" y="432.8" font-size="7.5" fill="#303030" text-anchor="middle" font-weight="normal" >7</text><text x="306.6" y="435.0" font-size="7.5" fill="#303030" text-anchor="middle" font-weight="normal" >8</text><text x="250.39999999999998" y="442.8" font-size="7.5" fill="#303030" text-anchor="middle" font-weight="normal" >4</text><text x="250.39999999999998" y="457.09999999999997" font-size="7.5" fill="#303030" text-anchor="middle" font-weight="normal" >3</text><text x="250.39999999999998" y="470.0" font-size="7.5" fill="#303030" text-anchor="middle" font-weight="normal" >2</text><text x="250.39999999999998" y="485.0" font-size="7.5" fill="#303030" text-anchor="middle" font-weight="normal" >1</text><text x="262.6" y="493.8" font-size="7.5" fill="#303030" text-anchor="middle" font-weight="normal" >0</text><text x="310.4" y="450.0" font-size="7.5" fill="#303030" text-anchor="middle" font-weight="normal" >9</text><text x="310.4" y="463.59999999999997" font-size="7.5" fill="#303030" text-anchor="middle" font-weight="normal" >10</text><text x="310.4" y="477.8" font-size="7.5" fill="#303030" text-anchor="middle" font-weight="normal" >11</text><text x="306.1" y="491.4" font-size="7.5" fill="#303030" text-anchor="middle" font-weight="normal" >12</text><text x="280.4" y="443.6" font-size="7.8" fill="#3a3a3a" text-anchor="middle" font-weight="normal" font-style="italic">Level</text><circle cx="280.4" cy="460.1" r="13.6" fill="url(#gRedKnob)"/><path d="M280.4 460.1 l 8.3 9.1" stroke="#202020" stroke-width="1.3"/><rect x="271.79999999999995" y="486.3" width="23.6" height="8.8" rx="3" fill="#000"/><text x="283.6" y="494.3" font-size="9.2" fill="#20e020" text-anchor="middle" font-weight="normal" letter-spacing="-0.5">12.0</text><path d="M172.5 424 H181.5 V438 L177 442.5 V475.4 H164.1 V433.5 Z" fill="#ececec" stroke="#3a3a3a" stroke-width="1.3" stroke-linejoin="round"/><path d="M183.7 423.2 H228.7 L237.8 431.5 V444 H226.2 L222 436.5 H183.7 Z" fill="#ececec" stroke="#3a3a3a" stroke-width="1.3" stroke-linejoin="round"/><rect x="224.9" y="445.6" width="12.9" height="29.8" fill="#ececec" stroke="#3a3a3a" stroke-width="1.3"/><text x="174" y="437.3" font-size="7.0" fill="#303030" text-anchor="middle" font-weight="normal" >10</text><text x="170.8" y="456.9" font-size="7.0" fill="#303030" text-anchor="middle" font-weight="normal" >1</text><text x="171.3" y="473.8" font-size="7.0" fill="#303030" text-anchor="middle" font-weight="normal" >0.1</text><text x="191.5" y="433.2" font-size="7.0" fill="#303030" text-anchor="middle" font-weight="normal" >0.1</text><text x="208.8" y="433.2" font-size="7.0" fill="#303030" text-anchor="middle" font-weight="normal" >1</text><text x="227.9" y="436.5" font-size="7.0" fill="#303030" text-anchor="middle" font-weight="normal" >10</text><text x="231.2" y="458.0" font-size="7.0" fill="#303030" text-anchor="middle" font-weight="normal" >0.1</text><text x="231.2" y="471.3" font-size="7.0" fill="#303030" text-anchor="middle" font-weight="normal" >1</text><text x="171.3" y="423.1" font-size="5" fill="#505050" text-anchor="middle" font-weight="normal" >Hz</text><text x="231.5" y="423.1" font-size="5" fill="#505050" text-anchor="middle" font-weight="normal" >KHz</text><text x="231.2" y="480.5" font-size="5" fill="#505050" text-anchor="middle" font-weight="normal" >MHz</text><text x="202.2" y="443.2" font-size="7.6" fill="#3a3a3a" text-anchor="middle" font-weight="normal" font-style="italic">Range</text><circle cx="201.4" cy="460.5" r="13.2" fill="url(#gBlueKnob)"/><path d="M201.4 460.5 L192.3 452.2" stroke="#202020" stroke-width="1.3"/><text x="201.4" y="492.7" font-size="6.65" fill="#282828" text-anchor="middle" font-weight="normal" stroke="#282828" stroke-width="0.2">Frequency</text><path d="M332 423.6 H358.5 V436.5 H340 L335.1 441.5 V462.7 H322 V433.6 Z" fill="#ececec" stroke="#3a3a3a" stroke-width="1.3" stroke-linejoin="round"/><path d="M359.8 423.6 H386 L396.3 433.6 V462.7 H383 V441.5 L378 436.5 H359.8 Z" fill="#ececec" stroke="#3a3a3a" stroke-width="1.3" stroke-linejoin="round"/><text x="349.4" y="432.7" font-size="7.0" fill="#303030" text-anchor="middle" font-weight="normal" >10</text><text x="328.6" y="454.8" font-size="7.0" fill="#303030" text-anchor="middle" font-weight="normal" >1</text><text x="370.3" y="432.7" font-size="7.0" fill="#303030" text-anchor="middle" font-weight="normal" >0.1</text><text x="388.5" y="454.8" font-size="7.0" fill="#303030" text-anchor="middle" font-weight="normal" >1</text><text x="329.4" y="422.3" font-size="5" fill="#505050" text-anchor="middle" font-weight="normal" >mV</text><text x="389.3" y="422.3" font-size="5" fill="#505050" text-anchor="middle" font-weight="normal" >V</text><text x="359" y="443.2" font-size="7.6" fill="#3a3a3a" text-anchor="middle" font-weight="normal" font-style="italic">Range</text><circle cx="360" cy="460.5" r="13.3" fill="url(#gRedKnob)"/><path d="M360 460.5 L371.7 456.1" stroke="#202020" stroke-width="1.3"/><text x="359" y="492.9" font-size="6.9" fill="#282828" text-anchor="middle" font-weight="normal" stroke="#282828" stroke-width="0.2">Amplitude</text><circle cx="404.1" cy="425.7" r="2.8" fill="#104a10" stroke="#082808" stroke-width="0.5"/><circle cx="404.1" cy="436.7" r="2.8" fill="#104a10" stroke="#082808" stroke-width="0.5"/><circle cx="404.1" cy="448.4" r="2.8" fill="#104a10" stroke="#082808" stroke-width="0.5"/><circle cx="404.1" cy="459.6" r="2.8" fill="#40e040" stroke="#208020" stroke-width="0.5"/><circle cx="404.1" cy="472.6" r="2.8" fill="#104a10" stroke="#082808" stroke-width="0.5"/><circle cx="404.1" cy="483.5" r="2.8" fill="#40e040" stroke="#208020" stroke-width="0.5"/><path d="M413.2 428.6 V423.9 H418 V428.6 H422.4 V423.9" fill="none" stroke="#202020" stroke-width="1.1"/><path d="M413.2 439 V434.8 L422.8 439.2" fill="none" stroke="#202020" stroke-width="1.1"/><path d="M412.5 450.5 L416 446.5 L419.5 450.5 L423 447" fill="none" stroke="#202020" stroke-width="1.1"/><path d="M412.5 459.6 Q415 454 417.7 459.6 T423 459.6" fill="none" stroke="#202020" stroke-width="1"/><text x="418.4" y="475" font-size="6.9" fill="#303030" text-anchor="middle" font-weight="normal" >Uni</text><text x="415.8" y="485.9" font-size="6.9" fill="#303030" text-anchor="middle" font-weight="normal" >Bi</text><rect x="433.5" y="424.2" width="15.7" height="15.1" fill="#888" stroke="#303030" stroke-width="1"/><line x1="434.5" y1="425" x2="448.5" y2="425" stroke="#d8d8d8" stroke-width="1" /><line x1="434.3" y1="425" x2="434.3" y2="438.5" stroke="#d8d8d8" stroke-width="1" /><rect x="433.5" y="471" width="15.7" height="14.6" fill="#888" stroke="#303030" stroke-width="1"/><line x1="434.5" y1="471.8" x2="448.5" y2="471.8" stroke="#d8d8d8" stroke-width="1" /><line x1="434.3" y1="471.8" x2="434.3" y2="485" stroke="#d8d8d8" stroke-width="1" /><text x="441.9" y="449" font-size="6.9" fill="#303030" text-anchor="middle" font-weight="normal" >Waveform</text><text x="441.9" y="493.8" font-size="6.9" fill="#303030" text-anchor="middle" font-weight="normal" >Polarity</text><line x1="0" y1="532" x2="768" y2="532" stroke="#ffffff" stroke-width="1" /><path d="M16.6 539.8 A4.6 4.6 0 1 0 16.6 546.2" fill="none" stroke="#2a4ab0" stroke-width="2"/><path d="M13.5 538.6 L18.8 537 L18.2 542.6 Z" fill="#2a4ab0"/><path d="M25 539.8 A4.6 4.6 0 1 1 25 546.2" fill="none" stroke="#2a4ab0" stroke-width="2"/><path d="M28.1 538.6 L22.8 537 L23.4 542.6 Z" fill="#2a4ab0"/><rect x="38" y="536" width="20.5" height="13.7" fill="#fff" stroke="#7a7a7a" stroke-width="0.8"/><line x1="38.5" y1="536.5" x2="58" y2="536.5" stroke="#404040" stroke-width="0.9" /><line x1="38.5" y1="536.5" x2="38.5" y2="549" stroke="#404040" stroke-width="0.9" /><text x="39.8" y="544.8" font-size="7.8" fill="#202020" text-anchor="start" font-weight="normal" >0°</text><line x1="62" y1="535" x2="62" y2="550" stroke="#c8c5b5" stroke-width="1" /><line x1="63" y1="535" x2="63" y2="550" stroke="#ffffff" stroke-width="1" /><path d="M65 542.5 L68.5 539.5 V541.5 H73.5 V539.5 L77 542.5 L73.5 545.5 V543.5 H68.5 V545.5 Z" fill="#3a60c0"/><path d="M87 536.5 L90 540 H88 V545 H90 L87 548.5 L84 545 H86 V540 H84 Z" fill="#3a60c0"/><line x1="100" y1="535" x2="100" y2="550" stroke="#c8c5b5" stroke-width="1" /><line x1="101" y1="535" x2="101" y2="550" stroke="#ffffff" stroke-width="1" /><rect x="108.5" y="536.5" width="28.900000000000006" height="12.5" fill="#f2f1ea" stroke="#3a3a3a" stroke-width="0.9"/><rect x="137.4" y="536.5" width="29.599999999999994" height="12.5" fill="#f2f1ea" stroke="#3a3a3a" stroke-width="0.9"/><rect x="167" y="536.5" width="29" height="12.5" fill="#f2f1ea" stroke="#3a3a3a" stroke-width="0.9"/><rect x="196" y="536.5" width="29.69999999999999" height="12.5" fill="#f2f1ea" stroke="#3a3a3a" stroke-width="0.9"/><path d="M120.5 539 L127 542.8 L120.5 546.6 Z" fill="#10a010"/><path d="M149 539 V546.6 M150.8 539 L156.5 542.8 L150.8 546.6 Z" fill="#101010" stroke="#101010" stroke-width="1.2"/><rect x="177.5" y="539" width="2.2" height="7.6" fill="#101010" /><rect x="182.5" y="539" width="2.2" height="7.6" fill="#101010" /><rect x="206.7" y="539" width="7.6" height="7.6" fill="#101010" /><rect x="230" y="535" width="73.6" height="15" fill="#eeede4" stroke="#d6d3c6" stroke-width="0.8"/><circle cx="237.7" cy="542.6" r="5" fill="#20a020" stroke="#107010" stroke-width="0.5"/><rect x="236.9" y="540.8" width="1.6" height="4.6" fill="#fff" /><rect x="236.9" y="538.6" width="1.6" height="1.4" fill="#fff" /><text x="250.8" y="546.5" font-size="8.6" fill="#202020" text-anchor="start" font-weight="normal" textLength="46.90" lengthAdjust="spacingAndGlyphs" >2 Message(s)</text><line x1="309" y1="535" x2="309" y2="550" stroke="#c8c5b5" stroke-width="1" /><line x1="310" y1="535" x2="310" y2="550" stroke="#ffffff" stroke-width="1" /><rect x="315.6" y="535" width="345.8" height="15" fill="#eeede4" stroke="#c6c3b6" stroke-width="0.8"/><text x="316.6" y="546.3" font-size="8.1" fill="#2a7a2a" text-anchor="start" font-weight="normal" >ANIMATING: 00:01:12.000000 (CPU load 31%)</text><line x1="663" y1="535" x2="663" y2="550" stroke="#c8c5b5" stroke-width="1" /><line x1="664" y1="535" x2="664" y2="550" stroke="#ffffff" stroke-width="1" /><rect x="666.7" y="535" width="98.8" height="15" fill="#eeede4" stroke="#c6c3b6" stroke-width="0.8"/><rect x="0" y="553.4" width="768" height="20.6" fill="url(#gTask)" /><line x1="0" y1="553.6" x2="768" y2="553.6" stroke="#5a94f4" stroke-width="0.8" /><path d="M0 553.4 H66 Q75 554 75 564 Q75 573.5 67 574 H0 Z" fill="url(#gStart)"/><path d="M9.5 558.5 Q11.5 557.3 14 558.3 L13 562.8 Q10.5 562 8.5 563 Z" fill="#f05020"/><path d="M15 558.6 Q17.5 558 20 559 L19 563.5 Q16.5 562.7 14 563.2 Z" fill="#50c030"/><path d="M8.3 564 Q10.3 563 12.8 563.8 L11.8 568.3 Q9.3 567.5 7.3 568.5 Z" fill="#3080f0"/><path d="M13.8 564.2 Q16.3 563.6 18.8 564.6 L17.8 569.2 Q15.3 568.4 12.8 568.9 Z" fill="#f8c820"/><text x="25.3" y="569.3" font-size="12.2" fill="#1a4a1a" text-anchor="start" font-weight="bold" font-style="italic" letter-spacing="0.2" opacity="0.5">Inicio</text><text x="24.6" y="568.6" font-size="12.2" fill="#ffffff" text-anchor="start" font-weight="bold" font-style="italic" letter-spacing="0.2">Inicio</text><rect x="82.5" y="556.5" width="119.5" height="17.5" rx="2.5" fill="#3a80f2" stroke="#4a8cf6" stroke-width="0.6"/><path d="M90 560 H94 L95.5 561.5 H101 V569 H90 Z" fill="#e8c860" stroke="#907020" stroke-width="0.5"/><text x="105" y="567.5" font-size="7.2" fill="#ffffff" text-anchor="start" font-weight="normal" >PELUA</text><rect x="203.3" y="555.5" width="119.7" height="18.5" rx="2" fill="#1e4ec0" stroke="#2a5ad0" stroke-width="0.6"/><rect x="210" y="559.5" width="12" height="8.5" fill="#1c2ad0" stroke="#c8d0ff" stroke-width="0.5"/><text x="211" y="566.3" font-size="5" fill="#dfe6ff" text-anchor="start" font-weight="bold" >ISIS</text><text x="225.7" y="567.6" font-size="8.25" fill="#ffffff" text-anchor="start" font-weight="normal" >Rerductor señal rued...</text><text x="579" y="568" font-size="8.2" fill="#ffffff" text-anchor="start" font-weight="normal" >ES</text><path d="M599.4 553 H768 V574 H599.4 Z" fill="url(#gTray)"/><line x1="599.4" y1="553" x2="599.4" y2="574" stroke="#0a5ab0" stroke-width="1" /><rect x="606.8" y="558.5" width="11.2" height="11.5" fill="#e8702a" rx="1.5" stroke="#b04a10" stroke-width="0.5"/><path d="M609.5 565 H615 Q615 568 612.2 568 Q609.5 568 609.5 565 Z M611 561 Q613 562.5 611.5 564" fill="none" stroke="#fff" stroke-width="0.9"/><path d="M620.6 559.5 L625.1 558.3 L629.6 559.5 V564 Q629.6 568.2 625.1 570.3 Q620.6 568.2 620.6 564 Z" fill="#f4d020" stroke="#705a10" stroke-width="0.5"/><rect x="624.5" y="561" width="1.2" height="4.5" fill="#202020" /><rect x="624.5" y="566.5" width="1.2" height="1.3" fill="#202020" /><rect x="633" y="561" width="7" height="5.5" fill="#d0d8f0" stroke="#304080" stroke-width="0.6"/><rect x="634.5" y="566.5" width="4" height="2" fill="#404a80"/><path d="M641 559.5 Q643 562 641 565 M643 558.5 Q645.8 562 643 566" fill="none" stroke="#e8f0ff" stroke-width="0.7"/><circle cx="652.7" cy="564" r="5.6" fill="#f4a020" stroke="#c87010" stroke-width="0.5"/><path d="M650.5 566 A2.6 2.6 0 1 1 655.2 565.3" fill="none" stroke="#fff" stroke-width="1.5"/><rect x="660.8" y="567.5" width="1.6" height="2.0" fill="#70c040" /><rect x="663.0" y="565.9" width="1.6" height="3.6" fill="#70c040" /><rect x="665.1999999999999" y="564.3" width="1.6" height="5.2" fill="#e8f0e0" /><rect x="667.4" y="562.7" width="1.6" height="6.800000000000001" fill="#e8f0e0" /><rect x="669.5999999999999" y="561.1" width="1.6" height="8.4" fill="#e8f0e0" /><rect x="675" y="558.5" width="6" height="8" fill="#7080c0" stroke="#303870" stroke-width="0.5"/><rect x="677.5" y="561" width="6" height="6" fill="#5060a0" stroke="#303870" stroke-width="0.5"/><path d="M680 565 L685.5 570.5 M685.5 565 L680 570.5" stroke="#e02020" stroke-width="1.4"/><circle cx="692.5" cy="563.3" r="4.6" fill="#506070" stroke="#304050" stroke-width="0.5"/><circle cx="692.5" cy="563.3" r="1.6" fill="#d0d8e0"/><path d="M694 568 L698.5 564" stroke="#a0b0d0" stroke-width="1.2"/><rect x="701.3" y="558.5" width="12" height="9" fill="#101830" stroke="#c0c8d8" stroke-width="0.5"/><path d="M703 566 L706 561 L708 564 L711 560" fill="none" stroke="#e0e8ff" stroke-width="0.8"/><rect x="704.5" y="567.5" width="5" height="2" fill="#c0c8d8"/><text x="718" y="567.6" font-size="8.6" fill="#ffffff" text-anchor="start" font-weight="normal" textLength="39.30" lengthAdjust="spacingAndGlyphs" >03:45 p.m.</text></svg></body></html>
